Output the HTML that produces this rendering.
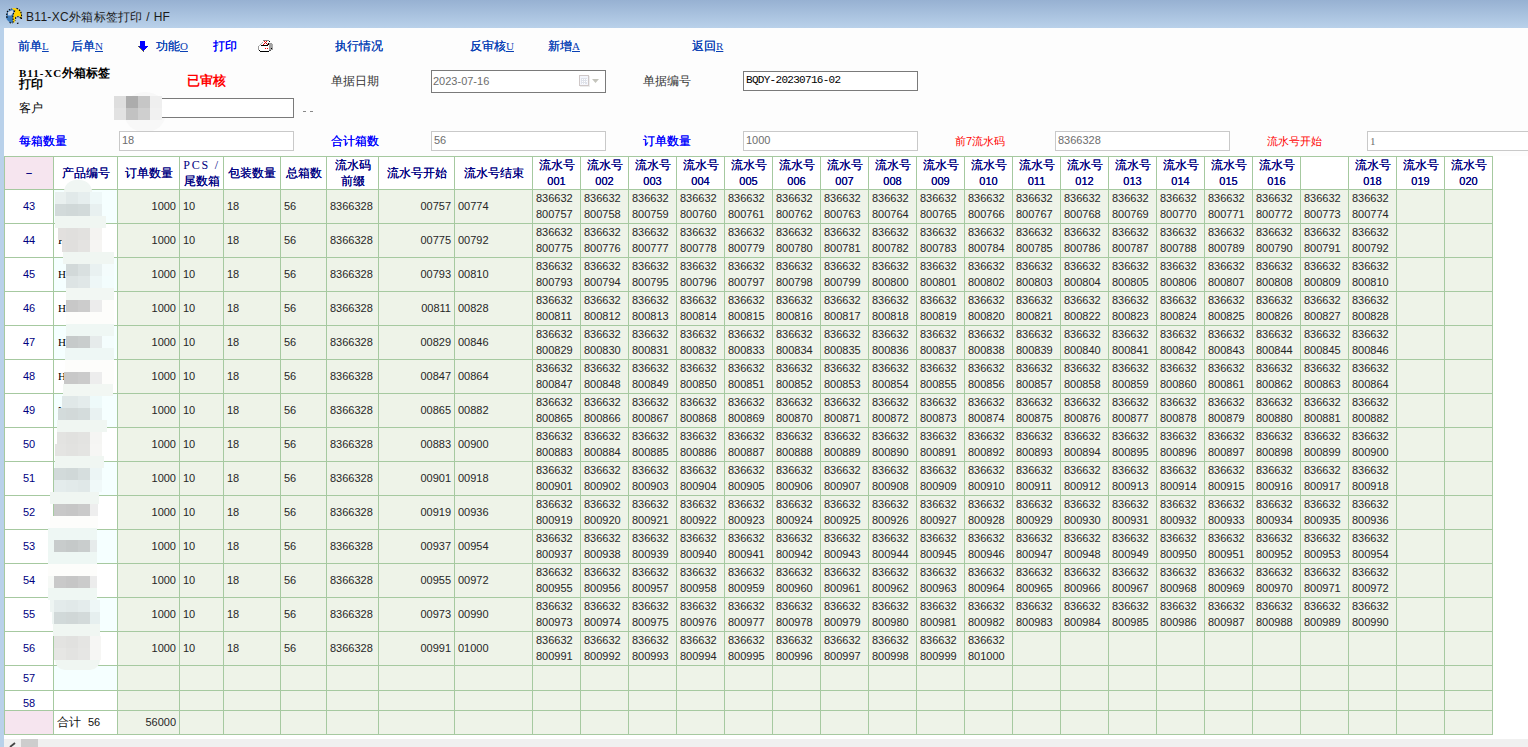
<!DOCTYPE html><html><head><meta charset="utf-8"><style>
html,body{margin:0;padding:0;}
body{width:1528px;height:747px;overflow:hidden;position:relative;background:#fff;font-family:"Liberation Sans", sans-serif;}
div{box-sizing:border-box;}
.u{text-decoration:underline;}
</style></head><body>
<div style="position:absolute;left:0px;top:0px;width:1528px;height:28px;background:linear-gradient(#97b1d2,#b9d1ea);"></div>
<div style="position:absolute;left:4px;top:28px;width:1524px;height:128px;background:#fdfdfd;"></div>
<div style="position:absolute;left:0px;top:28px;width:4px;height:719px;background:#b9d1ea;"></div>
<svg style="position:absolute;left:4px;top:6px" width="20" height="20" viewBox="0 0 20 20">
<path d="M2.5 9 Q3.5 4 8 3 L11 4 Q9 8 8.8 12 L9 17 Q5 17 2.5 13 Z" fill="#3b79b9"/>
<path d="M4 6 L8.5 4 L9.5 6.5 L7 9.5 L4 9.5 Z" fill="#cbd7e6"/>
<path d="M8 2 Q14 1.5 17 6 L17.8 13 L16 10.5 Q13.5 9 11.5 11.5 L10.5 16.5 L9 16.5 Q8.5 10 11 5.5 Z" fill="#ffd200"/>
<g fill="none" stroke="#000" stroke-width="1.1" stroke-dasharray="1.6 1.2">
<path d="M3 12 Q2 6 4.5 4.5 Q6 3 8 3"/>
<path d="M12.5 2.3 Q16.5 4 17.5 8 L17.5 13.5"/>
<path d="M11 4.5 Q8.5 8 9 12 L9.2 16.5"/>
<path d="M17 12.5 Q14.5 9.5 11.8 11.5 L11.2 14.5"/>
<path d="M5.5 16.5 L8.5 17.3 M13 17.5 L15.5 16.5"/>
</g>
</svg>
<div style="position:absolute;left:26px;top:9px;line-height:16px;text-align:left;white-space:nowrap;font-size:12px;color:#1b1b1b;letter-spacing:0.3px;">B11-XC外箱标签打印 / HF</div>
<div style="position:absolute;left:18px;top:38px;line-height:16px;text-align:left;white-space:nowrap;font-size:12px;color:#0a40b4;text-shadow:0 0 0.3px #0a40b4;">前单<span style="font-family:'Liberation Serif',serif;text-decoration:underline;font-size:11px;text-shadow:none;">L</span></div>
<div style="position:absolute;left:71px;top:38px;line-height:16px;text-align:left;white-space:nowrap;font-size:12px;color:#0a40b4;text-shadow:0 0 0.3px #0a40b4;">后单<span style="font-family:'Liberation Serif',serif;text-decoration:underline;font-size:11px;text-shadow:none;">N</span></div>
<svg style="position:absolute;left:130px;top:34px" width="30" height="24" viewBox="0 0 30 24" shape-rendering="crispEdges">
<rect x="10" y="7" width="5" height="5" fill="#0000ff"/>
<rect x="9" y="12" width="9" height="1" fill="#0000ff"/>
<rect x="10" y="13" width="7" height="1" fill="#0000ff"/>
<rect x="11" y="14" width="5" height="1" fill="#0000ff"/>
<rect x="12" y="15" width="3" height="1" fill="#0000ff"/>
<rect x="13" y="16" width="1" height="1" fill="#0000ff"/>
<rect x="8" y="12" width="1" height="1" fill="#6b6b30"/>
<rect x="9" y="13" width="1" height="1" fill="#6b6b40"/>
<rect x="10" y="14" width="1" height="1" fill="#6b6b40"/>
<rect x="11" y="15" width="1" height="1" fill="#6b6b40"/>
<rect x="12" y="16" width="1" height="1" fill="#6b6b50"/>
<rect x="13" y="17" width="1" height="1" fill="#6b6b50"/>
</svg>
<div style="position:absolute;left:156px;top:38px;line-height:16px;text-align:left;white-space:nowrap;font-size:12px;color:#0a40b4;text-shadow:0 0 0.3px #0a40b4;">功能<span style="font-family:'Liberation Serif',serif;text-decoration:underline;font-size:11px;text-shadow:none;">O</span></div>
<div style="position:absolute;left:213px;top:38px;line-height:16px;text-align:left;white-space:nowrap;font-size:12px;color:#0000ff;text-shadow:0 0 0.3px #0000ff;">打印</div>
<svg style="position:absolute;left:252px;top:34px" width="30" height="24" viewBox="0 0 30 24" shape-rendering="crispEdges">
<rect x="11" y="6" width="6" height="1" fill="#8a8a8a"/>
<rect x="17" y="7" width="1" height="1" fill="#000"/>
<rect x="12" y="7" width="1" height="1" fill="#e00"/><rect x="14" y="7" width="1" height="1" fill="#e00"/>
<rect x="13" y="8" width="1" height="1" fill="#e00"/>
<rect x="12" y="9" width="1" height="1" fill="#e00"/><rect x="14" y="9" width="1" height="1" fill="#900"/>
<rect x="11" y="10" width="1" height="1" fill="#e00"/><rect x="15" y="10" width="1" height="1" fill="#900"/>
<rect x="10" y="8" width="1" height="1" fill="#aaa"/><rect x="9" y="9" width="1" height="1" fill="#bbb"/><rect x="8" y="10" width="1" height="1" fill="#aaa"/><rect x="7" y="11" width="1" height="1" fill="#bbb"/>
<rect x="9" y="11" width="7" height="1" fill="#000"/><rect x="16" y="9" width="1" height="2" fill="#000"/>
<rect x="17" y="9" width="3" height="1" fill="#9a9a9a"/>
<rect x="6" y="12" width="1" height="4" fill="#9a9a9a"/>
<rect x="7" y="12" width="10" height="4" fill="#fff"/>
<rect x="17" y="10" width="4" height="6" fill="#a3a3a3"/><rect x="20" y="10" width="1" height="3" fill="#aaa"/>
<rect x="19" y="14" width="1" height="1" fill="#000"/>
<rect x="13" y="14" width="1" height="1" fill="#f00"/><rect x="15" y="14" width="1" height="1" fill="#f00"/>
<rect x="7" y="16" width="1" height="1" fill="#000"/>
<rect x="8" y="17" width="9" height="1" fill="#000"/><rect x="17" y="16" width="2" height="1" fill="#555"/>
</svg>
<div style="position:absolute;left:335px;top:38px;line-height:16px;text-align:left;white-space:nowrap;font-size:12px;color:#0a40b4;text-shadow:0 0 0.3px #0a40b4;">执行情况</div>
<div style="position:absolute;left:470px;top:38px;line-height:16px;text-align:left;white-space:nowrap;font-size:12px;color:#0a40b4;text-shadow:0 0 0.3px #0a40b4;">反审核<span style="font-family:'Liberation Serif',serif;text-decoration:underline;font-size:11px;text-shadow:none;">U</span></div>
<div style="position:absolute;left:548px;top:38px;line-height:16px;text-align:left;white-space:nowrap;font-size:12px;color:#0a40b4;text-shadow:0 0 0.3px #0a40b4;">新增<span style="font-family:'Liberation Serif',serif;text-decoration:underline;font-size:11px;text-shadow:none;">A</span></div>
<div style="position:absolute;left:692px;top:38px;line-height:16px;text-align:left;white-space:nowrap;font-size:12px;color:#0a40b4;text-shadow:0 0 0.3px #0a40b4;">返回<span style="font-family:'Liberation Serif',serif;text-decoration:underline;font-size:11px;text-shadow:none;">R</span></div>
<div style="position:absolute;left:19px;top:68px;line-height:11px;text-align:left;white-space:nowrap;font-size:12px;font-weight:bold;color:#000;font-family:'Liberation Serif',serif;"><span style="letter-spacing:1px;font-size:11px">B11-XC</span>外箱标签<br>打印</div>
<div style="position:absolute;left:187px;top:73px;line-height:16px;text-align:left;white-space:nowrap;font-size:12.5px;font-weight:bold;color:#f00;">已审核</div>
<div style="position:absolute;left:331px;top:73px;line-height:16px;text-align:left;white-space:nowrap;font-size:12px;color:#333;">单据日期</div>
<div style="position:absolute;left:431px;top:70px;width:175px;height:23px;border:1px solid #7a7a7a;background:#fff;"></div>
<div style="position:absolute;left:433px;top:74px;line-height:14px;text-align:left;white-space:nowrap;font-size:11px;color:#6d6d6d;">2023-07-16</div>
<svg style="position:absolute;left:578px;top:74px" width="24" height="14" viewBox="0 0 24 14" shape-rendering="crispEdges">
<rect x="2" y="2" width="10" height="11" fill="#ededed"/>
<rect x="1" y="1" width="10" height="11" fill="#cfc8c8"/>
<rect x="2" y="2" width="8" height="9" fill="#f4f6fc"/>
<rect x="3" y="4" width="6" height="6" fill="#dfe2ea"/>
<rect x="4" y="5" width="1" height="1" fill="#fff"/><rect x="6" y="5" width="1" height="1" fill="#fff"/><rect x="8" y="5" width="1" height="1" fill="#fff"/>
<rect x="4" y="7" width="1" height="1" fill="#fff"/><rect x="6" y="7" width="1" height="1" fill="#fff"/><rect x="8" y="7" width="1" height="1" fill="#fff"/>
<rect x="4" y="9" width="1" height="1" fill="#fff"/><rect x="6" y="9" width="1" height="1" fill="#fff"/>
<path d="M14 5 H21 L17.5 9Z" fill="#c4c4bc" shape-rendering="auto"/>
</svg>
<div style="position:absolute;left:643px;top:73px;line-height:16px;text-align:left;white-space:nowrap;font-size:12px;color:#333;">单据编号</div>
<div style="position:absolute;left:743px;top:71px;width:175px;height:20px;border:1px solid #7a7a7a;background:#fff;"></div>
<div style="position:absolute;left:746px;top:73px;line-height:14px;text-align:left;white-space:nowrap;font-size:11px;color:#000;font-family:'Liberation Mono',monospace;letter-spacing:-0.7px;">BQDY-20230716-02</div>
<div style="position:absolute;left:19px;top:101px;line-height:14px;text-align:left;white-space:nowrap;font-size:12px;color:#000;">客户</div>
<div style="position:absolute;left:162px;top:98px;width:132px;height:20px;border:1px solid #7a7a7a;border-left:none;background:#fff;"></div>
<div style="position:absolute;left:124px;top:92px;width:42px;height:40px;background:#f8f8f8;border-radius:20px;"></div>
<div style="position:absolute;left:162px;top:98px;width:132px;height:20px;border:1px solid #7a7a7a;border-left:none;background:#fff;"></div>
<div style="position:absolute;left:114px;top:96px;width:12px;height:12px;background:#dedede;"></div>
<div style="position:absolute;left:126px;top:96px;width:12px;height:12px;background:#acacac;"></div>
<div style="position:absolute;left:138px;top:96px;width:12px;height:12px;background:#c6c6c6;"></div>
<div style="position:absolute;left:114px;top:108px;width:12px;height:12px;background:#e2e2e2;"></div>
<div style="position:absolute;left:126px;top:108px;width:12px;height:12px;background:#c2c2c2;"></div>
<div style="position:absolute;left:138px;top:108px;width:12px;height:12px;background:#cfcfcf;"></div>
<div style="position:absolute;left:150px;top:96px;width:12px;height:12px;background:#efefef;"></div>
<div style="position:absolute;left:150px;top:108px;width:12px;height:12px;background:#f1f1f1;"></div>
<div style="position:absolute;left:303px;top:111px;width:3px;height:1px;background:#888;"></div>
<div style="position:absolute;left:310px;top:111px;width:3px;height:1px;background:#888;"></div>
<div style="position:absolute;left:19px;top:133px;line-height:16px;text-align:left;white-space:nowrap;font-size:12px;color:#0000ff;text-shadow:0 0 0.2px #0000ff;">每箱数量</div>
<div style="position:absolute;left:119px;top:131px;width:175px;height:20px;border:1px solid #c9c9c9;background:#fff;"></div>
<div style="position:absolute;left:122px;top:133px;line-height:14px;text-align:left;white-space:nowrap;font-size:11px;color:#6d6d6d;">18</div>
<div style="position:absolute;left:331px;top:133px;line-height:16px;text-align:left;white-space:nowrap;font-size:12px;color:#0000ff;text-shadow:0 0 0.2px #0000ff;">合计箱数</div>
<div style="position:absolute;left:431px;top:131px;width:175px;height:20px;border:1px solid #c9c9c9;background:#fff;"></div>
<div style="position:absolute;left:434px;top:133px;line-height:14px;text-align:left;white-space:nowrap;font-size:11px;color:#6d6d6d;">56</div>
<div style="position:absolute;left:643px;top:133px;line-height:16px;text-align:left;white-space:nowrap;font-size:12px;color:#0000ff;text-shadow:0 0 0.2px #0000ff;">订单数量</div>
<div style="position:absolute;left:743px;top:131px;width:175px;height:20px;border:1px solid #c9c9c9;background:#fff;"></div>
<div style="position:absolute;left:746px;top:133px;line-height:14px;text-align:left;white-space:nowrap;font-size:11px;color:#6d6d6d;">1000</div>
<div style="position:absolute;left:955px;top:134px;line-height:14px;text-align:left;white-space:nowrap;font-size:11px;color:#f00;">前7流水码</div>
<div style="position:absolute;left:1055px;top:131px;width:175px;height:20px;border:1px solid #c9c9c9;background:#fff;"></div>
<div style="position:absolute;left:1058px;top:133px;line-height:14px;text-align:left;white-space:nowrap;font-size:11px;color:#6d6d6d;">8366328</div>
<div style="position:absolute;left:1267px;top:134px;line-height:14px;text-align:left;white-space:nowrap;font-size:11px;color:#f00;">流水号开始</div>
<div style="position:absolute;left:1367px;top:131px;width:175px;height:20px;border:1px solid #c9c9c9;background:#fff;"></div>
<div style="position:absolute;left:1370px;top:134px;line-height:14px;text-align:left;white-space:nowrap;font-size:11px;color:#6d6d6d;font-family:'Liberation Serif',serif;">1</div>
<div style="position:absolute;left:4px;top:156px;width:49px;height:33px;background:#f6e5ef;"></div>
<div style="position:absolute;left:53px;top:189px;width:64px;height:34px;background:#f5ffff;"></div>
<div style="position:absolute;left:117px;top:189px;width:62px;height:34px;background:#eef3e8;"></div>
<div style="position:absolute;left:179px;top:189px;width:44px;height:34px;background:#eef3e8;"></div>
<div style="position:absolute;left:223px;top:189px;width:57px;height:34px;background:#eef3e8;"></div>
<div style="position:absolute;left:280px;top:189px;width:46px;height:34px;background:#eef3e8;"></div>
<div style="position:absolute;left:326px;top:189px;width:52px;height:34px;background:#eef3e8;"></div>
<div style="position:absolute;left:378px;top:189px;width:76px;height:34px;background:#eef3e8;"></div>
<div style="position:absolute;left:454px;top:189px;width:78px;height:34px;background:#eef3e8;"></div>
<div style="position:absolute;left:532px;top:189px;width:48px;height:34px;background:#eef3e8;"></div>
<div style="position:absolute;left:580px;top:189px;width:48px;height:34px;background:#eef3e8;"></div>
<div style="position:absolute;left:628px;top:189px;width:48px;height:34px;background:#eef3e8;"></div>
<div style="position:absolute;left:676px;top:189px;width:48px;height:34px;background:#eef3e8;"></div>
<div style="position:absolute;left:724px;top:189px;width:48px;height:34px;background:#eef3e8;"></div>
<div style="position:absolute;left:772px;top:189px;width:48px;height:34px;background:#eef3e8;"></div>
<div style="position:absolute;left:820px;top:189px;width:48px;height:34px;background:#eef3e8;"></div>
<div style="position:absolute;left:868px;top:189px;width:48px;height:34px;background:#eef3e8;"></div>
<div style="position:absolute;left:916px;top:189px;width:48px;height:34px;background:#eef3e8;"></div>
<div style="position:absolute;left:964px;top:189px;width:48px;height:34px;background:#eef3e8;"></div>
<div style="position:absolute;left:1012px;top:189px;width:48px;height:34px;background:#eef3e8;"></div>
<div style="position:absolute;left:1060px;top:189px;width:48px;height:34px;background:#eef3e8;"></div>
<div style="position:absolute;left:1108px;top:189px;width:48px;height:34px;background:#eef3e8;"></div>
<div style="position:absolute;left:1156px;top:189px;width:48px;height:34px;background:#eef3e8;"></div>
<div style="position:absolute;left:1204px;top:189px;width:48px;height:34px;background:#eef3e8;"></div>
<div style="position:absolute;left:1252px;top:189px;width:48px;height:34px;background:#eef3e8;"></div>
<div style="position:absolute;left:1300px;top:189px;width:48px;height:34px;background:#eef3e8;"></div>
<div style="position:absolute;left:1348px;top:189px;width:48px;height:34px;background:#eef3e8;"></div>
<div style="position:absolute;left:1396px;top:189px;width:48px;height:34px;background:#eef3e8;"></div>
<div style="position:absolute;left:1444px;top:189px;width:48px;height:34px;background:#eef3e8;"></div>
<div style="position:absolute;left:117px;top:223px;width:62px;height:34px;background:#eef3e8;"></div>
<div style="position:absolute;left:179px;top:223px;width:44px;height:34px;background:#eef3e8;"></div>
<div style="position:absolute;left:223px;top:223px;width:57px;height:34px;background:#eef3e8;"></div>
<div style="position:absolute;left:280px;top:223px;width:46px;height:34px;background:#eef3e8;"></div>
<div style="position:absolute;left:326px;top:223px;width:52px;height:34px;background:#eef3e8;"></div>
<div style="position:absolute;left:378px;top:223px;width:76px;height:34px;background:#eef3e8;"></div>
<div style="position:absolute;left:454px;top:223px;width:78px;height:34px;background:#eef3e8;"></div>
<div style="position:absolute;left:532px;top:223px;width:48px;height:34px;background:#eef3e8;"></div>
<div style="position:absolute;left:580px;top:223px;width:48px;height:34px;background:#eef3e8;"></div>
<div style="position:absolute;left:628px;top:223px;width:48px;height:34px;background:#eef3e8;"></div>
<div style="position:absolute;left:676px;top:223px;width:48px;height:34px;background:#eef3e8;"></div>
<div style="position:absolute;left:724px;top:223px;width:48px;height:34px;background:#eef3e8;"></div>
<div style="position:absolute;left:772px;top:223px;width:48px;height:34px;background:#eef3e8;"></div>
<div style="position:absolute;left:820px;top:223px;width:48px;height:34px;background:#eef3e8;"></div>
<div style="position:absolute;left:868px;top:223px;width:48px;height:34px;background:#eef3e8;"></div>
<div style="position:absolute;left:916px;top:223px;width:48px;height:34px;background:#eef3e8;"></div>
<div style="position:absolute;left:964px;top:223px;width:48px;height:34px;background:#eef3e8;"></div>
<div style="position:absolute;left:1012px;top:223px;width:48px;height:34px;background:#eef3e8;"></div>
<div style="position:absolute;left:1060px;top:223px;width:48px;height:34px;background:#eef3e8;"></div>
<div style="position:absolute;left:1108px;top:223px;width:48px;height:34px;background:#eef3e8;"></div>
<div style="position:absolute;left:1156px;top:223px;width:48px;height:34px;background:#eef3e8;"></div>
<div style="position:absolute;left:1204px;top:223px;width:48px;height:34px;background:#eef3e8;"></div>
<div style="position:absolute;left:1252px;top:223px;width:48px;height:34px;background:#eef3e8;"></div>
<div style="position:absolute;left:1300px;top:223px;width:48px;height:34px;background:#eef3e8;"></div>
<div style="position:absolute;left:1348px;top:223px;width:48px;height:34px;background:#eef3e8;"></div>
<div style="position:absolute;left:1396px;top:223px;width:48px;height:34px;background:#eef3e8;"></div>
<div style="position:absolute;left:1444px;top:223px;width:48px;height:34px;background:#eef3e8;"></div>
<div style="position:absolute;left:53px;top:257px;width:64px;height:34px;background:#f5ffff;"></div>
<div style="position:absolute;left:117px;top:257px;width:62px;height:34px;background:#eef3e8;"></div>
<div style="position:absolute;left:179px;top:257px;width:44px;height:34px;background:#eef3e8;"></div>
<div style="position:absolute;left:223px;top:257px;width:57px;height:34px;background:#eef3e8;"></div>
<div style="position:absolute;left:280px;top:257px;width:46px;height:34px;background:#eef3e8;"></div>
<div style="position:absolute;left:326px;top:257px;width:52px;height:34px;background:#eef3e8;"></div>
<div style="position:absolute;left:378px;top:257px;width:76px;height:34px;background:#eef3e8;"></div>
<div style="position:absolute;left:454px;top:257px;width:78px;height:34px;background:#eef3e8;"></div>
<div style="position:absolute;left:532px;top:257px;width:48px;height:34px;background:#eef3e8;"></div>
<div style="position:absolute;left:580px;top:257px;width:48px;height:34px;background:#eef3e8;"></div>
<div style="position:absolute;left:628px;top:257px;width:48px;height:34px;background:#eef3e8;"></div>
<div style="position:absolute;left:676px;top:257px;width:48px;height:34px;background:#eef3e8;"></div>
<div style="position:absolute;left:724px;top:257px;width:48px;height:34px;background:#eef3e8;"></div>
<div style="position:absolute;left:772px;top:257px;width:48px;height:34px;background:#eef3e8;"></div>
<div style="position:absolute;left:820px;top:257px;width:48px;height:34px;background:#eef3e8;"></div>
<div style="position:absolute;left:868px;top:257px;width:48px;height:34px;background:#eef3e8;"></div>
<div style="position:absolute;left:916px;top:257px;width:48px;height:34px;background:#eef3e8;"></div>
<div style="position:absolute;left:964px;top:257px;width:48px;height:34px;background:#eef3e8;"></div>
<div style="position:absolute;left:1012px;top:257px;width:48px;height:34px;background:#eef3e8;"></div>
<div style="position:absolute;left:1060px;top:257px;width:48px;height:34px;background:#eef3e8;"></div>
<div style="position:absolute;left:1108px;top:257px;width:48px;height:34px;background:#eef3e8;"></div>
<div style="position:absolute;left:1156px;top:257px;width:48px;height:34px;background:#eef3e8;"></div>
<div style="position:absolute;left:1204px;top:257px;width:48px;height:34px;background:#eef3e8;"></div>
<div style="position:absolute;left:1252px;top:257px;width:48px;height:34px;background:#eef3e8;"></div>
<div style="position:absolute;left:1300px;top:257px;width:48px;height:34px;background:#eef3e8;"></div>
<div style="position:absolute;left:1348px;top:257px;width:48px;height:34px;background:#eef3e8;"></div>
<div style="position:absolute;left:1396px;top:257px;width:48px;height:34px;background:#eef3e8;"></div>
<div style="position:absolute;left:1444px;top:257px;width:48px;height:34px;background:#eef3e8;"></div>
<div style="position:absolute;left:117px;top:291px;width:62px;height:34px;background:#eef3e8;"></div>
<div style="position:absolute;left:179px;top:291px;width:44px;height:34px;background:#eef3e8;"></div>
<div style="position:absolute;left:223px;top:291px;width:57px;height:34px;background:#eef3e8;"></div>
<div style="position:absolute;left:280px;top:291px;width:46px;height:34px;background:#eef3e8;"></div>
<div style="position:absolute;left:326px;top:291px;width:52px;height:34px;background:#eef3e8;"></div>
<div style="position:absolute;left:378px;top:291px;width:76px;height:34px;background:#eef3e8;"></div>
<div style="position:absolute;left:454px;top:291px;width:78px;height:34px;background:#eef3e8;"></div>
<div style="position:absolute;left:532px;top:291px;width:48px;height:34px;background:#eef3e8;"></div>
<div style="position:absolute;left:580px;top:291px;width:48px;height:34px;background:#eef3e8;"></div>
<div style="position:absolute;left:628px;top:291px;width:48px;height:34px;background:#eef3e8;"></div>
<div style="position:absolute;left:676px;top:291px;width:48px;height:34px;background:#eef3e8;"></div>
<div style="position:absolute;left:724px;top:291px;width:48px;height:34px;background:#eef3e8;"></div>
<div style="position:absolute;left:772px;top:291px;width:48px;height:34px;background:#eef3e8;"></div>
<div style="position:absolute;left:820px;top:291px;width:48px;height:34px;background:#eef3e8;"></div>
<div style="position:absolute;left:868px;top:291px;width:48px;height:34px;background:#eef3e8;"></div>
<div style="position:absolute;left:916px;top:291px;width:48px;height:34px;background:#eef3e8;"></div>
<div style="position:absolute;left:964px;top:291px;width:48px;height:34px;background:#eef3e8;"></div>
<div style="position:absolute;left:1012px;top:291px;width:48px;height:34px;background:#eef3e8;"></div>
<div style="position:absolute;left:1060px;top:291px;width:48px;height:34px;background:#eef3e8;"></div>
<div style="position:absolute;left:1108px;top:291px;width:48px;height:34px;background:#eef3e8;"></div>
<div style="position:absolute;left:1156px;top:291px;width:48px;height:34px;background:#eef3e8;"></div>
<div style="position:absolute;left:1204px;top:291px;width:48px;height:34px;background:#eef3e8;"></div>
<div style="position:absolute;left:1252px;top:291px;width:48px;height:34px;background:#eef3e8;"></div>
<div style="position:absolute;left:1300px;top:291px;width:48px;height:34px;background:#eef3e8;"></div>
<div style="position:absolute;left:1348px;top:291px;width:48px;height:34px;background:#eef3e8;"></div>
<div style="position:absolute;left:1396px;top:291px;width:48px;height:34px;background:#eef3e8;"></div>
<div style="position:absolute;left:1444px;top:291px;width:48px;height:34px;background:#eef3e8;"></div>
<div style="position:absolute;left:53px;top:325px;width:64px;height:34px;background:#f5ffff;"></div>
<div style="position:absolute;left:117px;top:325px;width:62px;height:34px;background:#eef3e8;"></div>
<div style="position:absolute;left:179px;top:325px;width:44px;height:34px;background:#eef3e8;"></div>
<div style="position:absolute;left:223px;top:325px;width:57px;height:34px;background:#eef3e8;"></div>
<div style="position:absolute;left:280px;top:325px;width:46px;height:34px;background:#eef3e8;"></div>
<div style="position:absolute;left:326px;top:325px;width:52px;height:34px;background:#eef3e8;"></div>
<div style="position:absolute;left:378px;top:325px;width:76px;height:34px;background:#eef3e8;"></div>
<div style="position:absolute;left:454px;top:325px;width:78px;height:34px;background:#eef3e8;"></div>
<div style="position:absolute;left:532px;top:325px;width:48px;height:34px;background:#eef3e8;"></div>
<div style="position:absolute;left:580px;top:325px;width:48px;height:34px;background:#eef3e8;"></div>
<div style="position:absolute;left:628px;top:325px;width:48px;height:34px;background:#eef3e8;"></div>
<div style="position:absolute;left:676px;top:325px;width:48px;height:34px;background:#eef3e8;"></div>
<div style="position:absolute;left:724px;top:325px;width:48px;height:34px;background:#eef3e8;"></div>
<div style="position:absolute;left:772px;top:325px;width:48px;height:34px;background:#eef3e8;"></div>
<div style="position:absolute;left:820px;top:325px;width:48px;height:34px;background:#eef3e8;"></div>
<div style="position:absolute;left:868px;top:325px;width:48px;height:34px;background:#eef3e8;"></div>
<div style="position:absolute;left:916px;top:325px;width:48px;height:34px;background:#eef3e8;"></div>
<div style="position:absolute;left:964px;top:325px;width:48px;height:34px;background:#eef3e8;"></div>
<div style="position:absolute;left:1012px;top:325px;width:48px;height:34px;background:#eef3e8;"></div>
<div style="position:absolute;left:1060px;top:325px;width:48px;height:34px;background:#eef3e8;"></div>
<div style="position:absolute;left:1108px;top:325px;width:48px;height:34px;background:#eef3e8;"></div>
<div style="position:absolute;left:1156px;top:325px;width:48px;height:34px;background:#eef3e8;"></div>
<div style="position:absolute;left:1204px;top:325px;width:48px;height:34px;background:#eef3e8;"></div>
<div style="position:absolute;left:1252px;top:325px;width:48px;height:34px;background:#eef3e8;"></div>
<div style="position:absolute;left:1300px;top:325px;width:48px;height:34px;background:#eef3e8;"></div>
<div style="position:absolute;left:1348px;top:325px;width:48px;height:34px;background:#eef3e8;"></div>
<div style="position:absolute;left:1396px;top:325px;width:48px;height:34px;background:#eef3e8;"></div>
<div style="position:absolute;left:1444px;top:325px;width:48px;height:34px;background:#eef3e8;"></div>
<div style="position:absolute;left:117px;top:359px;width:62px;height:34px;background:#eef3e8;"></div>
<div style="position:absolute;left:179px;top:359px;width:44px;height:34px;background:#eef3e8;"></div>
<div style="position:absolute;left:223px;top:359px;width:57px;height:34px;background:#eef3e8;"></div>
<div style="position:absolute;left:280px;top:359px;width:46px;height:34px;background:#eef3e8;"></div>
<div style="position:absolute;left:326px;top:359px;width:52px;height:34px;background:#eef3e8;"></div>
<div style="position:absolute;left:378px;top:359px;width:76px;height:34px;background:#eef3e8;"></div>
<div style="position:absolute;left:454px;top:359px;width:78px;height:34px;background:#eef3e8;"></div>
<div style="position:absolute;left:532px;top:359px;width:48px;height:34px;background:#eef3e8;"></div>
<div style="position:absolute;left:580px;top:359px;width:48px;height:34px;background:#eef3e8;"></div>
<div style="position:absolute;left:628px;top:359px;width:48px;height:34px;background:#eef3e8;"></div>
<div style="position:absolute;left:676px;top:359px;width:48px;height:34px;background:#eef3e8;"></div>
<div style="position:absolute;left:724px;top:359px;width:48px;height:34px;background:#eef3e8;"></div>
<div style="position:absolute;left:772px;top:359px;width:48px;height:34px;background:#eef3e8;"></div>
<div style="position:absolute;left:820px;top:359px;width:48px;height:34px;background:#eef3e8;"></div>
<div style="position:absolute;left:868px;top:359px;width:48px;height:34px;background:#eef3e8;"></div>
<div style="position:absolute;left:916px;top:359px;width:48px;height:34px;background:#eef3e8;"></div>
<div style="position:absolute;left:964px;top:359px;width:48px;height:34px;background:#eef3e8;"></div>
<div style="position:absolute;left:1012px;top:359px;width:48px;height:34px;background:#eef3e8;"></div>
<div style="position:absolute;left:1060px;top:359px;width:48px;height:34px;background:#eef3e8;"></div>
<div style="position:absolute;left:1108px;top:359px;width:48px;height:34px;background:#eef3e8;"></div>
<div style="position:absolute;left:1156px;top:359px;width:48px;height:34px;background:#eef3e8;"></div>
<div style="position:absolute;left:1204px;top:359px;width:48px;height:34px;background:#eef3e8;"></div>
<div style="position:absolute;left:1252px;top:359px;width:48px;height:34px;background:#eef3e8;"></div>
<div style="position:absolute;left:1300px;top:359px;width:48px;height:34px;background:#eef3e8;"></div>
<div style="position:absolute;left:1348px;top:359px;width:48px;height:34px;background:#eef3e8;"></div>
<div style="position:absolute;left:1396px;top:359px;width:48px;height:34px;background:#eef3e8;"></div>
<div style="position:absolute;left:1444px;top:359px;width:48px;height:34px;background:#eef3e8;"></div>
<div style="position:absolute;left:53px;top:393px;width:64px;height:34px;background:#f5ffff;"></div>
<div style="position:absolute;left:117px;top:393px;width:62px;height:34px;background:#eef3e8;"></div>
<div style="position:absolute;left:179px;top:393px;width:44px;height:34px;background:#eef3e8;"></div>
<div style="position:absolute;left:223px;top:393px;width:57px;height:34px;background:#eef3e8;"></div>
<div style="position:absolute;left:280px;top:393px;width:46px;height:34px;background:#eef3e8;"></div>
<div style="position:absolute;left:326px;top:393px;width:52px;height:34px;background:#eef3e8;"></div>
<div style="position:absolute;left:378px;top:393px;width:76px;height:34px;background:#eef3e8;"></div>
<div style="position:absolute;left:454px;top:393px;width:78px;height:34px;background:#eef3e8;"></div>
<div style="position:absolute;left:532px;top:393px;width:48px;height:34px;background:#eef3e8;"></div>
<div style="position:absolute;left:580px;top:393px;width:48px;height:34px;background:#eef3e8;"></div>
<div style="position:absolute;left:628px;top:393px;width:48px;height:34px;background:#eef3e8;"></div>
<div style="position:absolute;left:676px;top:393px;width:48px;height:34px;background:#eef3e8;"></div>
<div style="position:absolute;left:724px;top:393px;width:48px;height:34px;background:#eef3e8;"></div>
<div style="position:absolute;left:772px;top:393px;width:48px;height:34px;background:#eef3e8;"></div>
<div style="position:absolute;left:820px;top:393px;width:48px;height:34px;background:#eef3e8;"></div>
<div style="position:absolute;left:868px;top:393px;width:48px;height:34px;background:#eef3e8;"></div>
<div style="position:absolute;left:916px;top:393px;width:48px;height:34px;background:#eef3e8;"></div>
<div style="position:absolute;left:964px;top:393px;width:48px;height:34px;background:#eef3e8;"></div>
<div style="position:absolute;left:1012px;top:393px;width:48px;height:34px;background:#eef3e8;"></div>
<div style="position:absolute;left:1060px;top:393px;width:48px;height:34px;background:#eef3e8;"></div>
<div style="position:absolute;left:1108px;top:393px;width:48px;height:34px;background:#eef3e8;"></div>
<div style="position:absolute;left:1156px;top:393px;width:48px;height:34px;background:#eef3e8;"></div>
<div style="position:absolute;left:1204px;top:393px;width:48px;height:34px;background:#eef3e8;"></div>
<div style="position:absolute;left:1252px;top:393px;width:48px;height:34px;background:#eef3e8;"></div>
<div style="position:absolute;left:1300px;top:393px;width:48px;height:34px;background:#eef3e8;"></div>
<div style="position:absolute;left:1348px;top:393px;width:48px;height:34px;background:#eef3e8;"></div>
<div style="position:absolute;left:1396px;top:393px;width:48px;height:34px;background:#eef3e8;"></div>
<div style="position:absolute;left:1444px;top:393px;width:48px;height:34px;background:#eef3e8;"></div>
<div style="position:absolute;left:117px;top:427px;width:62px;height:34px;background:#eef3e8;"></div>
<div style="position:absolute;left:179px;top:427px;width:44px;height:34px;background:#eef3e8;"></div>
<div style="position:absolute;left:223px;top:427px;width:57px;height:34px;background:#eef3e8;"></div>
<div style="position:absolute;left:280px;top:427px;width:46px;height:34px;background:#eef3e8;"></div>
<div style="position:absolute;left:326px;top:427px;width:52px;height:34px;background:#eef3e8;"></div>
<div style="position:absolute;left:378px;top:427px;width:76px;height:34px;background:#eef3e8;"></div>
<div style="position:absolute;left:454px;top:427px;width:78px;height:34px;background:#eef3e8;"></div>
<div style="position:absolute;left:532px;top:427px;width:48px;height:34px;background:#eef3e8;"></div>
<div style="position:absolute;left:580px;top:427px;width:48px;height:34px;background:#eef3e8;"></div>
<div style="position:absolute;left:628px;top:427px;width:48px;height:34px;background:#eef3e8;"></div>
<div style="position:absolute;left:676px;top:427px;width:48px;height:34px;background:#eef3e8;"></div>
<div style="position:absolute;left:724px;top:427px;width:48px;height:34px;background:#eef3e8;"></div>
<div style="position:absolute;left:772px;top:427px;width:48px;height:34px;background:#eef3e8;"></div>
<div style="position:absolute;left:820px;top:427px;width:48px;height:34px;background:#eef3e8;"></div>
<div style="position:absolute;left:868px;top:427px;width:48px;height:34px;background:#eef3e8;"></div>
<div style="position:absolute;left:916px;top:427px;width:48px;height:34px;background:#eef3e8;"></div>
<div style="position:absolute;left:964px;top:427px;width:48px;height:34px;background:#eef3e8;"></div>
<div style="position:absolute;left:1012px;top:427px;width:48px;height:34px;background:#eef3e8;"></div>
<div style="position:absolute;left:1060px;top:427px;width:48px;height:34px;background:#eef3e8;"></div>
<div style="position:absolute;left:1108px;top:427px;width:48px;height:34px;background:#eef3e8;"></div>
<div style="position:absolute;left:1156px;top:427px;width:48px;height:34px;background:#eef3e8;"></div>
<div style="position:absolute;left:1204px;top:427px;width:48px;height:34px;background:#eef3e8;"></div>
<div style="position:absolute;left:1252px;top:427px;width:48px;height:34px;background:#eef3e8;"></div>
<div style="position:absolute;left:1300px;top:427px;width:48px;height:34px;background:#eef3e8;"></div>
<div style="position:absolute;left:1348px;top:427px;width:48px;height:34px;background:#eef3e8;"></div>
<div style="position:absolute;left:1396px;top:427px;width:48px;height:34px;background:#eef3e8;"></div>
<div style="position:absolute;left:1444px;top:427px;width:48px;height:34px;background:#eef3e8;"></div>
<div style="position:absolute;left:53px;top:461px;width:64px;height:34px;background:#f5ffff;"></div>
<div style="position:absolute;left:117px;top:461px;width:62px;height:34px;background:#eef3e8;"></div>
<div style="position:absolute;left:179px;top:461px;width:44px;height:34px;background:#eef3e8;"></div>
<div style="position:absolute;left:223px;top:461px;width:57px;height:34px;background:#eef3e8;"></div>
<div style="position:absolute;left:280px;top:461px;width:46px;height:34px;background:#eef3e8;"></div>
<div style="position:absolute;left:326px;top:461px;width:52px;height:34px;background:#eef3e8;"></div>
<div style="position:absolute;left:378px;top:461px;width:76px;height:34px;background:#eef3e8;"></div>
<div style="position:absolute;left:454px;top:461px;width:78px;height:34px;background:#eef3e8;"></div>
<div style="position:absolute;left:532px;top:461px;width:48px;height:34px;background:#eef3e8;"></div>
<div style="position:absolute;left:580px;top:461px;width:48px;height:34px;background:#eef3e8;"></div>
<div style="position:absolute;left:628px;top:461px;width:48px;height:34px;background:#eef3e8;"></div>
<div style="position:absolute;left:676px;top:461px;width:48px;height:34px;background:#eef3e8;"></div>
<div style="position:absolute;left:724px;top:461px;width:48px;height:34px;background:#eef3e8;"></div>
<div style="position:absolute;left:772px;top:461px;width:48px;height:34px;background:#eef3e8;"></div>
<div style="position:absolute;left:820px;top:461px;width:48px;height:34px;background:#eef3e8;"></div>
<div style="position:absolute;left:868px;top:461px;width:48px;height:34px;background:#eef3e8;"></div>
<div style="position:absolute;left:916px;top:461px;width:48px;height:34px;background:#eef3e8;"></div>
<div style="position:absolute;left:964px;top:461px;width:48px;height:34px;background:#eef3e8;"></div>
<div style="position:absolute;left:1012px;top:461px;width:48px;height:34px;background:#eef3e8;"></div>
<div style="position:absolute;left:1060px;top:461px;width:48px;height:34px;background:#eef3e8;"></div>
<div style="position:absolute;left:1108px;top:461px;width:48px;height:34px;background:#eef3e8;"></div>
<div style="position:absolute;left:1156px;top:461px;width:48px;height:34px;background:#eef3e8;"></div>
<div style="position:absolute;left:1204px;top:461px;width:48px;height:34px;background:#eef3e8;"></div>
<div style="position:absolute;left:1252px;top:461px;width:48px;height:34px;background:#eef3e8;"></div>
<div style="position:absolute;left:1300px;top:461px;width:48px;height:34px;background:#eef3e8;"></div>
<div style="position:absolute;left:1348px;top:461px;width:48px;height:34px;background:#eef3e8;"></div>
<div style="position:absolute;left:1396px;top:461px;width:48px;height:34px;background:#eef3e8;"></div>
<div style="position:absolute;left:1444px;top:461px;width:48px;height:34px;background:#eef3e8;"></div>
<div style="position:absolute;left:117px;top:495px;width:62px;height:34px;background:#eef3e8;"></div>
<div style="position:absolute;left:179px;top:495px;width:44px;height:34px;background:#eef3e8;"></div>
<div style="position:absolute;left:223px;top:495px;width:57px;height:34px;background:#eef3e8;"></div>
<div style="position:absolute;left:280px;top:495px;width:46px;height:34px;background:#eef3e8;"></div>
<div style="position:absolute;left:326px;top:495px;width:52px;height:34px;background:#eef3e8;"></div>
<div style="position:absolute;left:378px;top:495px;width:76px;height:34px;background:#eef3e8;"></div>
<div style="position:absolute;left:454px;top:495px;width:78px;height:34px;background:#eef3e8;"></div>
<div style="position:absolute;left:532px;top:495px;width:48px;height:34px;background:#eef3e8;"></div>
<div style="position:absolute;left:580px;top:495px;width:48px;height:34px;background:#eef3e8;"></div>
<div style="position:absolute;left:628px;top:495px;width:48px;height:34px;background:#eef3e8;"></div>
<div style="position:absolute;left:676px;top:495px;width:48px;height:34px;background:#eef3e8;"></div>
<div style="position:absolute;left:724px;top:495px;width:48px;height:34px;background:#eef3e8;"></div>
<div style="position:absolute;left:772px;top:495px;width:48px;height:34px;background:#eef3e8;"></div>
<div style="position:absolute;left:820px;top:495px;width:48px;height:34px;background:#eef3e8;"></div>
<div style="position:absolute;left:868px;top:495px;width:48px;height:34px;background:#eef3e8;"></div>
<div style="position:absolute;left:916px;top:495px;width:48px;height:34px;background:#eef3e8;"></div>
<div style="position:absolute;left:964px;top:495px;width:48px;height:34px;background:#eef3e8;"></div>
<div style="position:absolute;left:1012px;top:495px;width:48px;height:34px;background:#eef3e8;"></div>
<div style="position:absolute;left:1060px;top:495px;width:48px;height:34px;background:#eef3e8;"></div>
<div style="position:absolute;left:1108px;top:495px;width:48px;height:34px;background:#eef3e8;"></div>
<div style="position:absolute;left:1156px;top:495px;width:48px;height:34px;background:#eef3e8;"></div>
<div style="position:absolute;left:1204px;top:495px;width:48px;height:34px;background:#eef3e8;"></div>
<div style="position:absolute;left:1252px;top:495px;width:48px;height:34px;background:#eef3e8;"></div>
<div style="position:absolute;left:1300px;top:495px;width:48px;height:34px;background:#eef3e8;"></div>
<div style="position:absolute;left:1348px;top:495px;width:48px;height:34px;background:#eef3e8;"></div>
<div style="position:absolute;left:1396px;top:495px;width:48px;height:34px;background:#eef3e8;"></div>
<div style="position:absolute;left:1444px;top:495px;width:48px;height:34px;background:#eef3e8;"></div>
<div style="position:absolute;left:53px;top:529px;width:64px;height:34px;background:#f5ffff;"></div>
<div style="position:absolute;left:117px;top:529px;width:62px;height:34px;background:#eef3e8;"></div>
<div style="position:absolute;left:179px;top:529px;width:44px;height:34px;background:#eef3e8;"></div>
<div style="position:absolute;left:223px;top:529px;width:57px;height:34px;background:#eef3e8;"></div>
<div style="position:absolute;left:280px;top:529px;width:46px;height:34px;background:#eef3e8;"></div>
<div style="position:absolute;left:326px;top:529px;width:52px;height:34px;background:#eef3e8;"></div>
<div style="position:absolute;left:378px;top:529px;width:76px;height:34px;background:#eef3e8;"></div>
<div style="position:absolute;left:454px;top:529px;width:78px;height:34px;background:#eef3e8;"></div>
<div style="position:absolute;left:532px;top:529px;width:48px;height:34px;background:#eef3e8;"></div>
<div style="position:absolute;left:580px;top:529px;width:48px;height:34px;background:#eef3e8;"></div>
<div style="position:absolute;left:628px;top:529px;width:48px;height:34px;background:#eef3e8;"></div>
<div style="position:absolute;left:676px;top:529px;width:48px;height:34px;background:#eef3e8;"></div>
<div style="position:absolute;left:724px;top:529px;width:48px;height:34px;background:#eef3e8;"></div>
<div style="position:absolute;left:772px;top:529px;width:48px;height:34px;background:#eef3e8;"></div>
<div style="position:absolute;left:820px;top:529px;width:48px;height:34px;background:#eef3e8;"></div>
<div style="position:absolute;left:868px;top:529px;width:48px;height:34px;background:#eef3e8;"></div>
<div style="position:absolute;left:916px;top:529px;width:48px;height:34px;background:#eef3e8;"></div>
<div style="position:absolute;left:964px;top:529px;width:48px;height:34px;background:#eef3e8;"></div>
<div style="position:absolute;left:1012px;top:529px;width:48px;height:34px;background:#eef3e8;"></div>
<div style="position:absolute;left:1060px;top:529px;width:48px;height:34px;background:#eef3e8;"></div>
<div style="position:absolute;left:1108px;top:529px;width:48px;height:34px;background:#eef3e8;"></div>
<div style="position:absolute;left:1156px;top:529px;width:48px;height:34px;background:#eef3e8;"></div>
<div style="position:absolute;left:1204px;top:529px;width:48px;height:34px;background:#eef3e8;"></div>
<div style="position:absolute;left:1252px;top:529px;width:48px;height:34px;background:#eef3e8;"></div>
<div style="position:absolute;left:1300px;top:529px;width:48px;height:34px;background:#eef3e8;"></div>
<div style="position:absolute;left:1348px;top:529px;width:48px;height:34px;background:#eef3e8;"></div>
<div style="position:absolute;left:1396px;top:529px;width:48px;height:34px;background:#eef3e8;"></div>
<div style="position:absolute;left:1444px;top:529px;width:48px;height:34px;background:#eef3e8;"></div>
<div style="position:absolute;left:117px;top:563px;width:62px;height:34px;background:#eef3e8;"></div>
<div style="position:absolute;left:179px;top:563px;width:44px;height:34px;background:#eef3e8;"></div>
<div style="position:absolute;left:223px;top:563px;width:57px;height:34px;background:#eef3e8;"></div>
<div style="position:absolute;left:280px;top:563px;width:46px;height:34px;background:#eef3e8;"></div>
<div style="position:absolute;left:326px;top:563px;width:52px;height:34px;background:#eef3e8;"></div>
<div style="position:absolute;left:378px;top:563px;width:76px;height:34px;background:#eef3e8;"></div>
<div style="position:absolute;left:454px;top:563px;width:78px;height:34px;background:#eef3e8;"></div>
<div style="position:absolute;left:532px;top:563px;width:48px;height:34px;background:#eef3e8;"></div>
<div style="position:absolute;left:580px;top:563px;width:48px;height:34px;background:#eef3e8;"></div>
<div style="position:absolute;left:628px;top:563px;width:48px;height:34px;background:#eef3e8;"></div>
<div style="position:absolute;left:676px;top:563px;width:48px;height:34px;background:#eef3e8;"></div>
<div style="position:absolute;left:724px;top:563px;width:48px;height:34px;background:#eef3e8;"></div>
<div style="position:absolute;left:772px;top:563px;width:48px;height:34px;background:#eef3e8;"></div>
<div style="position:absolute;left:820px;top:563px;width:48px;height:34px;background:#eef3e8;"></div>
<div style="position:absolute;left:868px;top:563px;width:48px;height:34px;background:#eef3e8;"></div>
<div style="position:absolute;left:916px;top:563px;width:48px;height:34px;background:#eef3e8;"></div>
<div style="position:absolute;left:964px;top:563px;width:48px;height:34px;background:#eef3e8;"></div>
<div style="position:absolute;left:1012px;top:563px;width:48px;height:34px;background:#eef3e8;"></div>
<div style="position:absolute;left:1060px;top:563px;width:48px;height:34px;background:#eef3e8;"></div>
<div style="position:absolute;left:1108px;top:563px;width:48px;height:34px;background:#eef3e8;"></div>
<div style="position:absolute;left:1156px;top:563px;width:48px;height:34px;background:#eef3e8;"></div>
<div style="position:absolute;left:1204px;top:563px;width:48px;height:34px;background:#eef3e8;"></div>
<div style="position:absolute;left:1252px;top:563px;width:48px;height:34px;background:#eef3e8;"></div>
<div style="position:absolute;left:1300px;top:563px;width:48px;height:34px;background:#eef3e8;"></div>
<div style="position:absolute;left:1348px;top:563px;width:48px;height:34px;background:#eef3e8;"></div>
<div style="position:absolute;left:1396px;top:563px;width:48px;height:34px;background:#eef3e8;"></div>
<div style="position:absolute;left:1444px;top:563px;width:48px;height:34px;background:#eef3e8;"></div>
<div style="position:absolute;left:53px;top:597px;width:64px;height:34px;background:#f5ffff;"></div>
<div style="position:absolute;left:117px;top:597px;width:62px;height:34px;background:#eef3e8;"></div>
<div style="position:absolute;left:179px;top:597px;width:44px;height:34px;background:#eef3e8;"></div>
<div style="position:absolute;left:223px;top:597px;width:57px;height:34px;background:#eef3e8;"></div>
<div style="position:absolute;left:280px;top:597px;width:46px;height:34px;background:#eef3e8;"></div>
<div style="position:absolute;left:326px;top:597px;width:52px;height:34px;background:#eef3e8;"></div>
<div style="position:absolute;left:378px;top:597px;width:76px;height:34px;background:#eef3e8;"></div>
<div style="position:absolute;left:454px;top:597px;width:78px;height:34px;background:#eef3e8;"></div>
<div style="position:absolute;left:532px;top:597px;width:48px;height:34px;background:#eef3e8;"></div>
<div style="position:absolute;left:580px;top:597px;width:48px;height:34px;background:#eef3e8;"></div>
<div style="position:absolute;left:628px;top:597px;width:48px;height:34px;background:#eef3e8;"></div>
<div style="position:absolute;left:676px;top:597px;width:48px;height:34px;background:#eef3e8;"></div>
<div style="position:absolute;left:724px;top:597px;width:48px;height:34px;background:#eef3e8;"></div>
<div style="position:absolute;left:772px;top:597px;width:48px;height:34px;background:#eef3e8;"></div>
<div style="position:absolute;left:820px;top:597px;width:48px;height:34px;background:#eef3e8;"></div>
<div style="position:absolute;left:868px;top:597px;width:48px;height:34px;background:#eef3e8;"></div>
<div style="position:absolute;left:916px;top:597px;width:48px;height:34px;background:#eef3e8;"></div>
<div style="position:absolute;left:964px;top:597px;width:48px;height:34px;background:#eef3e8;"></div>
<div style="position:absolute;left:1012px;top:597px;width:48px;height:34px;background:#eef3e8;"></div>
<div style="position:absolute;left:1060px;top:597px;width:48px;height:34px;background:#eef3e8;"></div>
<div style="position:absolute;left:1108px;top:597px;width:48px;height:34px;background:#eef3e8;"></div>
<div style="position:absolute;left:1156px;top:597px;width:48px;height:34px;background:#eef3e8;"></div>
<div style="position:absolute;left:1204px;top:597px;width:48px;height:34px;background:#eef3e8;"></div>
<div style="position:absolute;left:1252px;top:597px;width:48px;height:34px;background:#eef3e8;"></div>
<div style="position:absolute;left:1300px;top:597px;width:48px;height:34px;background:#eef3e8;"></div>
<div style="position:absolute;left:1348px;top:597px;width:48px;height:34px;background:#eef3e8;"></div>
<div style="position:absolute;left:1396px;top:597px;width:48px;height:34px;background:#eef3e8;"></div>
<div style="position:absolute;left:1444px;top:597px;width:48px;height:34px;background:#eef3e8;"></div>
<div style="position:absolute;left:117px;top:631px;width:62px;height:34px;background:#eef3e8;"></div>
<div style="position:absolute;left:179px;top:631px;width:44px;height:34px;background:#eef3e8;"></div>
<div style="position:absolute;left:223px;top:631px;width:57px;height:34px;background:#eef3e8;"></div>
<div style="position:absolute;left:280px;top:631px;width:46px;height:34px;background:#eef3e8;"></div>
<div style="position:absolute;left:326px;top:631px;width:52px;height:34px;background:#eef3e8;"></div>
<div style="position:absolute;left:378px;top:631px;width:76px;height:34px;background:#eef3e8;"></div>
<div style="position:absolute;left:454px;top:631px;width:78px;height:34px;background:#eef3e8;"></div>
<div style="position:absolute;left:532px;top:631px;width:48px;height:34px;background:#eef3e8;"></div>
<div style="position:absolute;left:580px;top:631px;width:48px;height:34px;background:#eef3e8;"></div>
<div style="position:absolute;left:628px;top:631px;width:48px;height:34px;background:#eef3e8;"></div>
<div style="position:absolute;left:676px;top:631px;width:48px;height:34px;background:#eef3e8;"></div>
<div style="position:absolute;left:724px;top:631px;width:48px;height:34px;background:#eef3e8;"></div>
<div style="position:absolute;left:772px;top:631px;width:48px;height:34px;background:#eef3e8;"></div>
<div style="position:absolute;left:820px;top:631px;width:48px;height:34px;background:#eef3e8;"></div>
<div style="position:absolute;left:868px;top:631px;width:48px;height:34px;background:#eef3e8;"></div>
<div style="position:absolute;left:916px;top:631px;width:48px;height:34px;background:#eef3e8;"></div>
<div style="position:absolute;left:964px;top:631px;width:48px;height:34px;background:#eef3e8;"></div>
<div style="position:absolute;left:1012px;top:631px;width:48px;height:34px;background:#eef3e8;"></div>
<div style="position:absolute;left:1060px;top:631px;width:48px;height:34px;background:#eef3e8;"></div>
<div style="position:absolute;left:1108px;top:631px;width:48px;height:34px;background:#eef3e8;"></div>
<div style="position:absolute;left:1156px;top:631px;width:48px;height:34px;background:#eef3e8;"></div>
<div style="position:absolute;left:1204px;top:631px;width:48px;height:34px;background:#eef3e8;"></div>
<div style="position:absolute;left:1252px;top:631px;width:48px;height:34px;background:#eef3e8;"></div>
<div style="position:absolute;left:1300px;top:631px;width:48px;height:34px;background:#eef3e8;"></div>
<div style="position:absolute;left:1348px;top:631px;width:48px;height:34px;background:#eef3e8;"></div>
<div style="position:absolute;left:1396px;top:631px;width:48px;height:34px;background:#eef3e8;"></div>
<div style="position:absolute;left:1444px;top:631px;width:48px;height:34px;background:#eef3e8;"></div>
<div style="position:absolute;left:53px;top:665px;width:64px;height:25px;background:#f5ffff;"></div>
<div style="position:absolute;left:117px;top:665px;width:62px;height:25px;background:#eef3e8;"></div>
<div style="position:absolute;left:179px;top:665px;width:44px;height:25px;background:#eef3e8;"></div>
<div style="position:absolute;left:223px;top:665px;width:57px;height:25px;background:#eef3e8;"></div>
<div style="position:absolute;left:280px;top:665px;width:46px;height:25px;background:#eef3e8;"></div>
<div style="position:absolute;left:326px;top:665px;width:52px;height:25px;background:#eef3e8;"></div>
<div style="position:absolute;left:378px;top:665px;width:76px;height:25px;background:#eef3e8;"></div>
<div style="position:absolute;left:454px;top:665px;width:78px;height:25px;background:#eef3e8;"></div>
<div style="position:absolute;left:532px;top:665px;width:48px;height:25px;background:#eef3e8;"></div>
<div style="position:absolute;left:580px;top:665px;width:48px;height:25px;background:#eef3e8;"></div>
<div style="position:absolute;left:628px;top:665px;width:48px;height:25px;background:#eef3e8;"></div>
<div style="position:absolute;left:676px;top:665px;width:48px;height:25px;background:#eef3e8;"></div>
<div style="position:absolute;left:724px;top:665px;width:48px;height:25px;background:#eef3e8;"></div>
<div style="position:absolute;left:772px;top:665px;width:48px;height:25px;background:#eef3e8;"></div>
<div style="position:absolute;left:820px;top:665px;width:48px;height:25px;background:#eef3e8;"></div>
<div style="position:absolute;left:868px;top:665px;width:48px;height:25px;background:#eef3e8;"></div>
<div style="position:absolute;left:916px;top:665px;width:48px;height:25px;background:#eef3e8;"></div>
<div style="position:absolute;left:964px;top:665px;width:48px;height:25px;background:#eef3e8;"></div>
<div style="position:absolute;left:1012px;top:665px;width:48px;height:25px;background:#eef3e8;"></div>
<div style="position:absolute;left:1060px;top:665px;width:48px;height:25px;background:#eef3e8;"></div>
<div style="position:absolute;left:1108px;top:665px;width:48px;height:25px;background:#eef3e8;"></div>
<div style="position:absolute;left:1156px;top:665px;width:48px;height:25px;background:#eef3e8;"></div>
<div style="position:absolute;left:1204px;top:665px;width:48px;height:25px;background:#eef3e8;"></div>
<div style="position:absolute;left:1252px;top:665px;width:48px;height:25px;background:#eef3e8;"></div>
<div style="position:absolute;left:1300px;top:665px;width:48px;height:25px;background:#eef3e8;"></div>
<div style="position:absolute;left:1348px;top:665px;width:48px;height:25px;background:#eef3e8;"></div>
<div style="position:absolute;left:1396px;top:665px;width:48px;height:25px;background:#eef3e8;"></div>
<div style="position:absolute;left:1444px;top:665px;width:48px;height:25px;background:#eef3e8;"></div>
<div style="position:absolute;left:117px;top:690px;width:62px;height:20px;background:#eef3e8;"></div>
<div style="position:absolute;left:179px;top:690px;width:44px;height:20px;background:#eef3e8;"></div>
<div style="position:absolute;left:223px;top:690px;width:57px;height:20px;background:#eef3e8;"></div>
<div style="position:absolute;left:280px;top:690px;width:46px;height:20px;background:#eef3e8;"></div>
<div style="position:absolute;left:326px;top:690px;width:52px;height:20px;background:#eef3e8;"></div>
<div style="position:absolute;left:378px;top:690px;width:76px;height:20px;background:#eef3e8;"></div>
<div style="position:absolute;left:454px;top:690px;width:78px;height:20px;background:#eef3e8;"></div>
<div style="position:absolute;left:532px;top:690px;width:48px;height:20px;background:#eef3e8;"></div>
<div style="position:absolute;left:580px;top:690px;width:48px;height:20px;background:#eef3e8;"></div>
<div style="position:absolute;left:628px;top:690px;width:48px;height:20px;background:#eef3e8;"></div>
<div style="position:absolute;left:676px;top:690px;width:48px;height:20px;background:#eef3e8;"></div>
<div style="position:absolute;left:724px;top:690px;width:48px;height:20px;background:#eef3e8;"></div>
<div style="position:absolute;left:772px;top:690px;width:48px;height:20px;background:#eef3e8;"></div>
<div style="position:absolute;left:820px;top:690px;width:48px;height:20px;background:#eef3e8;"></div>
<div style="position:absolute;left:868px;top:690px;width:48px;height:20px;background:#eef3e8;"></div>
<div style="position:absolute;left:916px;top:690px;width:48px;height:20px;background:#eef3e8;"></div>
<div style="position:absolute;left:964px;top:690px;width:48px;height:20px;background:#eef3e8;"></div>
<div style="position:absolute;left:1012px;top:690px;width:48px;height:20px;background:#eef3e8;"></div>
<div style="position:absolute;left:1060px;top:690px;width:48px;height:20px;background:#eef3e8;"></div>
<div style="position:absolute;left:1108px;top:690px;width:48px;height:20px;background:#eef3e8;"></div>
<div style="position:absolute;left:1156px;top:690px;width:48px;height:20px;background:#eef3e8;"></div>
<div style="position:absolute;left:1204px;top:690px;width:48px;height:20px;background:#eef3e8;"></div>
<div style="position:absolute;left:1252px;top:690px;width:48px;height:20px;background:#eef3e8;"></div>
<div style="position:absolute;left:1300px;top:690px;width:48px;height:20px;background:#eef3e8;"></div>
<div style="position:absolute;left:1348px;top:690px;width:48px;height:20px;background:#eef3e8;"></div>
<div style="position:absolute;left:1396px;top:690px;width:48px;height:20px;background:#eef3e8;"></div>
<div style="position:absolute;left:1444px;top:690px;width:48px;height:20px;background:#eef3e8;"></div>
<div style="position:absolute;left:4px;top:710px;width:49px;height:24px;background:#f6e5ef;"></div>
<div style="position:absolute;left:117px;top:710px;width:62px;height:24px;background:#eef3e8;"></div>
<div style="position:absolute;left:179px;top:710px;width:44px;height:24px;background:#eef3e8;"></div>
<div style="position:absolute;left:223px;top:710px;width:57px;height:24px;background:#eef3e8;"></div>
<div style="position:absolute;left:280px;top:710px;width:46px;height:24px;background:#eef3e8;"></div>
<div style="position:absolute;left:326px;top:710px;width:52px;height:24px;background:#eef3e8;"></div>
<div style="position:absolute;left:378px;top:710px;width:76px;height:24px;background:#eef3e8;"></div>
<div style="position:absolute;left:454px;top:710px;width:78px;height:24px;background:#eef3e8;"></div>
<div style="position:absolute;left:532px;top:710px;width:48px;height:24px;background:#eef3e8;"></div>
<div style="position:absolute;left:580px;top:710px;width:48px;height:24px;background:#eef3e8;"></div>
<div style="position:absolute;left:628px;top:710px;width:48px;height:24px;background:#eef3e8;"></div>
<div style="position:absolute;left:676px;top:710px;width:48px;height:24px;background:#eef3e8;"></div>
<div style="position:absolute;left:724px;top:710px;width:48px;height:24px;background:#eef3e8;"></div>
<div style="position:absolute;left:772px;top:710px;width:48px;height:24px;background:#eef3e8;"></div>
<div style="position:absolute;left:820px;top:710px;width:48px;height:24px;background:#eef3e8;"></div>
<div style="position:absolute;left:868px;top:710px;width:48px;height:24px;background:#eef3e8;"></div>
<div style="position:absolute;left:916px;top:710px;width:48px;height:24px;background:#eef3e8;"></div>
<div style="position:absolute;left:964px;top:710px;width:48px;height:24px;background:#eef3e8;"></div>
<div style="position:absolute;left:1012px;top:710px;width:48px;height:24px;background:#eef3e8;"></div>
<div style="position:absolute;left:1060px;top:710px;width:48px;height:24px;background:#eef3e8;"></div>
<div style="position:absolute;left:1108px;top:710px;width:48px;height:24px;background:#eef3e8;"></div>
<div style="position:absolute;left:1156px;top:710px;width:48px;height:24px;background:#eef3e8;"></div>
<div style="position:absolute;left:1204px;top:710px;width:48px;height:24px;background:#eef3e8;"></div>
<div style="position:absolute;left:1252px;top:710px;width:48px;height:24px;background:#eef3e8;"></div>
<div style="position:absolute;left:1300px;top:710px;width:48px;height:24px;background:#eef3e8;"></div>
<div style="position:absolute;left:1348px;top:710px;width:48px;height:24px;background:#eef3e8;"></div>
<div style="position:absolute;left:1396px;top:710px;width:48px;height:24px;background:#eef3e8;"></div>
<div style="position:absolute;left:1444px;top:710px;width:48px;height:24px;background:#eef3e8;"></div>
<div style="position:absolute;left:4px;top:156px;width:1489px;height:1px;background:#a6c9a0;"></div>
<div style="position:absolute;left:4px;top:189px;width:1489px;height:1px;background:#a6c9a0;"></div>
<div style="position:absolute;left:4px;top:223px;width:1489px;height:1px;background:#a6c9a0;"></div>
<div style="position:absolute;left:4px;top:257px;width:1489px;height:1px;background:#a6c9a0;"></div>
<div style="position:absolute;left:4px;top:291px;width:1489px;height:1px;background:#a6c9a0;"></div>
<div style="position:absolute;left:4px;top:325px;width:1489px;height:1px;background:#a6c9a0;"></div>
<div style="position:absolute;left:4px;top:359px;width:1489px;height:1px;background:#a6c9a0;"></div>
<div style="position:absolute;left:4px;top:393px;width:1489px;height:1px;background:#a6c9a0;"></div>
<div style="position:absolute;left:4px;top:427px;width:1489px;height:1px;background:#a6c9a0;"></div>
<div style="position:absolute;left:4px;top:461px;width:1489px;height:1px;background:#a6c9a0;"></div>
<div style="position:absolute;left:4px;top:495px;width:1489px;height:1px;background:#a6c9a0;"></div>
<div style="position:absolute;left:4px;top:529px;width:1489px;height:1px;background:#a6c9a0;"></div>
<div style="position:absolute;left:4px;top:563px;width:1489px;height:1px;background:#a6c9a0;"></div>
<div style="position:absolute;left:4px;top:597px;width:1489px;height:1px;background:#a6c9a0;"></div>
<div style="position:absolute;left:4px;top:631px;width:1489px;height:1px;background:#a6c9a0;"></div>
<div style="position:absolute;left:4px;top:665px;width:1489px;height:1px;background:#a6c9a0;"></div>
<div style="position:absolute;left:4px;top:690px;width:1489px;height:1px;background:#a6c9a0;"></div>
<div style="position:absolute;left:4px;top:710px;width:1489px;height:1px;background:#a6c9a0;"></div>
<div style="position:absolute;left:4px;top:734px;width:1489px;height:1px;background:#a6c9a0;"></div>
<div style="position:absolute;left:4px;top:156px;width:1px;height:579px;background:#a6c9a0;"></div>
<div style="position:absolute;left:53px;top:156px;width:1px;height:579px;background:#a6c9a0;"></div>
<div style="position:absolute;left:117px;top:156px;width:1px;height:579px;background:#a6c9a0;"></div>
<div style="position:absolute;left:179px;top:156px;width:1px;height:579px;background:#a6c9a0;"></div>
<div style="position:absolute;left:223px;top:156px;width:1px;height:579px;background:#a6c9a0;"></div>
<div style="position:absolute;left:280px;top:156px;width:1px;height:579px;background:#a6c9a0;"></div>
<div style="position:absolute;left:326px;top:156px;width:1px;height:579px;background:#a6c9a0;"></div>
<div style="position:absolute;left:378px;top:156px;width:1px;height:579px;background:#a6c9a0;"></div>
<div style="position:absolute;left:454px;top:156px;width:1px;height:579px;background:#a6c9a0;"></div>
<div style="position:absolute;left:532px;top:156px;width:1px;height:579px;background:#a6c9a0;"></div>
<div style="position:absolute;left:580px;top:156px;width:1px;height:579px;background:#a6c9a0;"></div>
<div style="position:absolute;left:628px;top:156px;width:1px;height:579px;background:#a6c9a0;"></div>
<div style="position:absolute;left:676px;top:156px;width:1px;height:579px;background:#a6c9a0;"></div>
<div style="position:absolute;left:724px;top:156px;width:1px;height:579px;background:#a6c9a0;"></div>
<div style="position:absolute;left:772px;top:156px;width:1px;height:579px;background:#a6c9a0;"></div>
<div style="position:absolute;left:820px;top:156px;width:1px;height:579px;background:#a6c9a0;"></div>
<div style="position:absolute;left:868px;top:156px;width:1px;height:579px;background:#a6c9a0;"></div>
<div style="position:absolute;left:916px;top:156px;width:1px;height:579px;background:#a6c9a0;"></div>
<div style="position:absolute;left:964px;top:156px;width:1px;height:579px;background:#a6c9a0;"></div>
<div style="position:absolute;left:1012px;top:156px;width:1px;height:579px;background:#a6c9a0;"></div>
<div style="position:absolute;left:1060px;top:156px;width:1px;height:579px;background:#a6c9a0;"></div>
<div style="position:absolute;left:1108px;top:156px;width:1px;height:579px;background:#a6c9a0;"></div>
<div style="position:absolute;left:1156px;top:156px;width:1px;height:579px;background:#a6c9a0;"></div>
<div style="position:absolute;left:1204px;top:156px;width:1px;height:579px;background:#a6c9a0;"></div>
<div style="position:absolute;left:1252px;top:156px;width:1px;height:579px;background:#a6c9a0;"></div>
<div style="position:absolute;left:1300px;top:156px;width:1px;height:579px;background:#a6c9a0;"></div>
<div style="position:absolute;left:1348px;top:156px;width:1px;height:579px;background:#a6c9a0;"></div>
<div style="position:absolute;left:1396px;top:156px;width:1px;height:579px;background:#a6c9a0;"></div>
<div style="position:absolute;left:1444px;top:156px;width:1px;height:579px;background:#a6c9a0;"></div>
<div style="position:absolute;left:1492px;top:156px;width:1px;height:579px;background:#a6c9a0;"></div>
<div style="position:absolute;left:5px;top:165px;width:48px;line-height:16px;text-align:center;white-space:nowrap;font-size:12px;color:#00007f;text-shadow:0 0 0.25px #00007f;">－</div>
<div style="position:absolute;left:54px;top:165px;width:63px;line-height:16px;text-align:center;white-space:nowrap;font-size:12px;color:#00007f;text-shadow:0 0 0.25px #00007f;">产品编号</div>
<div style="position:absolute;left:118px;top:165px;width:61px;line-height:16px;text-align:center;white-space:nowrap;font-size:12px;color:#00007f;text-shadow:0 0 0.25px #00007f;">订单数量</div>
<div style="position:absolute;left:180px;top:157px;width:43px;line-height:16px;text-align:center;white-space:nowrap;font-size:12px;color:#00007f;font-family:'Liberation Serif',serif;letter-spacing:1.8px;">PCS /</div>
<div style="position:absolute;left:180px;top:173px;width:43px;line-height:16px;text-align:center;white-space:nowrap;font-size:12px;color:#00007f;text-shadow:0 0 0.25px #00007f;">尾数箱</div>
<div style="position:absolute;left:224px;top:165px;width:56px;line-height:16px;text-align:center;white-space:nowrap;font-size:12px;color:#00007f;text-shadow:0 0 0.25px #00007f;">包装数量</div>
<div style="position:absolute;left:281px;top:165px;width:45px;line-height:16px;text-align:center;white-space:nowrap;font-size:12px;color:#00007f;text-shadow:0 0 0.25px #00007f;">总箱数</div>
<div style="position:absolute;left:327px;top:157px;width:51px;line-height:16px;text-align:center;white-space:nowrap;font-size:12px;color:#00007f;text-shadow:0 0 0.25px #00007f;">流水码</div>
<div style="position:absolute;left:327px;top:173px;width:51px;line-height:16px;text-align:center;white-space:nowrap;font-size:12px;color:#00007f;text-shadow:0 0 0.25px #00007f;">前缀</div>
<div style="position:absolute;left:379px;top:165px;width:75px;line-height:16px;text-align:center;white-space:nowrap;font-size:12px;color:#00007f;text-shadow:0 0 0.25px #00007f;">流水号开始</div>
<div style="position:absolute;left:455px;top:165px;width:77px;line-height:16px;text-align:center;white-space:nowrap;font-size:12px;color:#00007f;text-shadow:0 0 0.25px #00007f;">流水号结束</div>
<div style="position:absolute;left:533px;top:157px;width:47px;line-height:16px;text-align:center;white-space:nowrap;font-size:12px;color:#00007f;text-shadow:0 0 0.25px #00007f;">流水号</div>
<div style="position:absolute;left:533px;top:173px;width:47px;line-height:16px;text-align:center;white-space:nowrap;font-size:11px;color:#00007f;text-shadow:0 0 0.3px #00007f;">001</div>
<div style="position:absolute;left:581px;top:157px;width:47px;line-height:16px;text-align:center;white-space:nowrap;font-size:12px;color:#00007f;text-shadow:0 0 0.25px #00007f;">流水号</div>
<div style="position:absolute;left:581px;top:173px;width:47px;line-height:16px;text-align:center;white-space:nowrap;font-size:11px;color:#00007f;text-shadow:0 0 0.3px #00007f;">002</div>
<div style="position:absolute;left:629px;top:157px;width:47px;line-height:16px;text-align:center;white-space:nowrap;font-size:12px;color:#00007f;text-shadow:0 0 0.25px #00007f;">流水号</div>
<div style="position:absolute;left:629px;top:173px;width:47px;line-height:16px;text-align:center;white-space:nowrap;font-size:11px;color:#00007f;text-shadow:0 0 0.3px #00007f;">003</div>
<div style="position:absolute;left:677px;top:157px;width:47px;line-height:16px;text-align:center;white-space:nowrap;font-size:12px;color:#00007f;text-shadow:0 0 0.25px #00007f;">流水号</div>
<div style="position:absolute;left:677px;top:173px;width:47px;line-height:16px;text-align:center;white-space:nowrap;font-size:11px;color:#00007f;text-shadow:0 0 0.3px #00007f;">004</div>
<div style="position:absolute;left:725px;top:157px;width:47px;line-height:16px;text-align:center;white-space:nowrap;font-size:12px;color:#00007f;text-shadow:0 0 0.25px #00007f;">流水号</div>
<div style="position:absolute;left:725px;top:173px;width:47px;line-height:16px;text-align:center;white-space:nowrap;font-size:11px;color:#00007f;text-shadow:0 0 0.3px #00007f;">005</div>
<div style="position:absolute;left:773px;top:157px;width:47px;line-height:16px;text-align:center;white-space:nowrap;font-size:12px;color:#00007f;text-shadow:0 0 0.25px #00007f;">流水号</div>
<div style="position:absolute;left:773px;top:173px;width:47px;line-height:16px;text-align:center;white-space:nowrap;font-size:11px;color:#00007f;text-shadow:0 0 0.3px #00007f;">006</div>
<div style="position:absolute;left:821px;top:157px;width:47px;line-height:16px;text-align:center;white-space:nowrap;font-size:12px;color:#00007f;text-shadow:0 0 0.25px #00007f;">流水号</div>
<div style="position:absolute;left:821px;top:173px;width:47px;line-height:16px;text-align:center;white-space:nowrap;font-size:11px;color:#00007f;text-shadow:0 0 0.3px #00007f;">007</div>
<div style="position:absolute;left:869px;top:157px;width:47px;line-height:16px;text-align:center;white-space:nowrap;font-size:12px;color:#00007f;text-shadow:0 0 0.25px #00007f;">流水号</div>
<div style="position:absolute;left:869px;top:173px;width:47px;line-height:16px;text-align:center;white-space:nowrap;font-size:11px;color:#00007f;text-shadow:0 0 0.3px #00007f;">008</div>
<div style="position:absolute;left:917px;top:157px;width:47px;line-height:16px;text-align:center;white-space:nowrap;font-size:12px;color:#00007f;text-shadow:0 0 0.25px #00007f;">流水号</div>
<div style="position:absolute;left:917px;top:173px;width:47px;line-height:16px;text-align:center;white-space:nowrap;font-size:11px;color:#00007f;text-shadow:0 0 0.3px #00007f;">009</div>
<div style="position:absolute;left:965px;top:157px;width:47px;line-height:16px;text-align:center;white-space:nowrap;font-size:12px;color:#00007f;text-shadow:0 0 0.25px #00007f;">流水号</div>
<div style="position:absolute;left:965px;top:173px;width:47px;line-height:16px;text-align:center;white-space:nowrap;font-size:11px;color:#00007f;text-shadow:0 0 0.3px #00007f;">010</div>
<div style="position:absolute;left:1013px;top:157px;width:47px;line-height:16px;text-align:center;white-space:nowrap;font-size:12px;color:#00007f;text-shadow:0 0 0.25px #00007f;">流水号</div>
<div style="position:absolute;left:1013px;top:173px;width:47px;line-height:16px;text-align:center;white-space:nowrap;font-size:11px;color:#00007f;text-shadow:0 0 0.3px #00007f;">011</div>
<div style="position:absolute;left:1061px;top:157px;width:47px;line-height:16px;text-align:center;white-space:nowrap;font-size:12px;color:#00007f;text-shadow:0 0 0.25px #00007f;">流水号</div>
<div style="position:absolute;left:1061px;top:173px;width:47px;line-height:16px;text-align:center;white-space:nowrap;font-size:11px;color:#00007f;text-shadow:0 0 0.3px #00007f;">012</div>
<div style="position:absolute;left:1109px;top:157px;width:47px;line-height:16px;text-align:center;white-space:nowrap;font-size:12px;color:#00007f;text-shadow:0 0 0.25px #00007f;">流水号</div>
<div style="position:absolute;left:1109px;top:173px;width:47px;line-height:16px;text-align:center;white-space:nowrap;font-size:11px;color:#00007f;text-shadow:0 0 0.3px #00007f;">013</div>
<div style="position:absolute;left:1157px;top:157px;width:47px;line-height:16px;text-align:center;white-space:nowrap;font-size:12px;color:#00007f;text-shadow:0 0 0.25px #00007f;">流水号</div>
<div style="position:absolute;left:1157px;top:173px;width:47px;line-height:16px;text-align:center;white-space:nowrap;font-size:11px;color:#00007f;text-shadow:0 0 0.3px #00007f;">014</div>
<div style="position:absolute;left:1205px;top:157px;width:47px;line-height:16px;text-align:center;white-space:nowrap;font-size:12px;color:#00007f;text-shadow:0 0 0.25px #00007f;">流水号</div>
<div style="position:absolute;left:1205px;top:173px;width:47px;line-height:16px;text-align:center;white-space:nowrap;font-size:11px;color:#00007f;text-shadow:0 0 0.3px #00007f;">015</div>
<div style="position:absolute;left:1253px;top:157px;width:47px;line-height:16px;text-align:center;white-space:nowrap;font-size:12px;color:#00007f;text-shadow:0 0 0.25px #00007f;">流水号</div>
<div style="position:absolute;left:1253px;top:173px;width:47px;line-height:16px;text-align:center;white-space:nowrap;font-size:11px;color:#00007f;text-shadow:0 0 0.3px #00007f;">016</div>
<div style="position:absolute;left:1349px;top:157px;width:47px;line-height:16px;text-align:center;white-space:nowrap;font-size:12px;color:#00007f;text-shadow:0 0 0.25px #00007f;">流水号</div>
<div style="position:absolute;left:1349px;top:173px;width:47px;line-height:16px;text-align:center;white-space:nowrap;font-size:11px;color:#00007f;text-shadow:0 0 0.3px #00007f;">018</div>
<div style="position:absolute;left:1397px;top:157px;width:47px;line-height:16px;text-align:center;white-space:nowrap;font-size:12px;color:#00007f;text-shadow:0 0 0.25px #00007f;">流水号</div>
<div style="position:absolute;left:1397px;top:173px;width:47px;line-height:16px;text-align:center;white-space:nowrap;font-size:11px;color:#00007f;text-shadow:0 0 0.3px #00007f;">019</div>
<div style="position:absolute;left:1445px;top:157px;width:47px;line-height:16px;text-align:center;white-space:nowrap;font-size:12px;color:#00007f;text-shadow:0 0 0.25px #00007f;">流水号</div>
<div style="position:absolute;left:1445px;top:173px;width:47px;line-height:16px;text-align:center;white-space:nowrap;font-size:11px;color:#00007f;text-shadow:0 0 0.3px #00007f;">020</div>
<div style="position:absolute;left:5px;top:199px;width:48px;line-height:14px;text-align:center;white-space:nowrap;font-size:11px;color:#00007f;">43</div>
<div style="position:absolute;left:58px;top:199px;line-height:14px;text-align:left;white-space:nowrap;font-size:11px;color:#000;font-family:'Liberation Serif',serif;">HI</div>
<div style="position:absolute;left:117px;top:199px;width:59px;line-height:14px;text-align:right;white-space:nowrap;font-size:11px;color:#262626;">1000</div>
<div style="position:absolute;left:183px;top:199px;line-height:14px;text-align:left;white-space:nowrap;font-size:11px;color:#262626;">10</div>
<div style="position:absolute;left:227px;top:199px;line-height:14px;text-align:left;white-space:nowrap;font-size:11px;color:#262626;">18</div>
<div style="position:absolute;left:284px;top:199px;line-height:14px;text-align:left;white-space:nowrap;font-size:11px;color:#262626;">56</div>
<div style="position:absolute;left:330px;top:199px;line-height:14px;text-align:left;white-space:nowrap;font-size:11px;color:#262626;">8366328</div>
<div style="position:absolute;left:378px;top:199px;width:73px;line-height:14px;text-align:right;white-space:nowrap;font-size:11px;color:#262626;">00757</div>
<div style="position:absolute;left:458px;top:199px;line-height:14px;text-align:left;white-space:nowrap;font-size:11px;color:#262626;">00774</div>
<div style="position:absolute;left:536px;top:190px;line-height:16px;text-align:left;white-space:nowrap;font-size:11px;color:#262626;">836632<br>800757</div>
<div style="position:absolute;left:584px;top:190px;line-height:16px;text-align:left;white-space:nowrap;font-size:11px;color:#262626;">836632<br>800758</div>
<div style="position:absolute;left:632px;top:190px;line-height:16px;text-align:left;white-space:nowrap;font-size:11px;color:#262626;">836632<br>800759</div>
<div style="position:absolute;left:680px;top:190px;line-height:16px;text-align:left;white-space:nowrap;font-size:11px;color:#262626;">836632<br>800760</div>
<div style="position:absolute;left:728px;top:190px;line-height:16px;text-align:left;white-space:nowrap;font-size:11px;color:#262626;">836632<br>800761</div>
<div style="position:absolute;left:776px;top:190px;line-height:16px;text-align:left;white-space:nowrap;font-size:11px;color:#262626;">836632<br>800762</div>
<div style="position:absolute;left:824px;top:190px;line-height:16px;text-align:left;white-space:nowrap;font-size:11px;color:#262626;">836632<br>800763</div>
<div style="position:absolute;left:872px;top:190px;line-height:16px;text-align:left;white-space:nowrap;font-size:11px;color:#262626;">836632<br>800764</div>
<div style="position:absolute;left:920px;top:190px;line-height:16px;text-align:left;white-space:nowrap;font-size:11px;color:#262626;">836632<br>800765</div>
<div style="position:absolute;left:968px;top:190px;line-height:16px;text-align:left;white-space:nowrap;font-size:11px;color:#262626;">836632<br>800766</div>
<div style="position:absolute;left:1016px;top:190px;line-height:16px;text-align:left;white-space:nowrap;font-size:11px;color:#262626;">836632<br>800767</div>
<div style="position:absolute;left:1064px;top:190px;line-height:16px;text-align:left;white-space:nowrap;font-size:11px;color:#262626;">836632<br>800768</div>
<div style="position:absolute;left:1112px;top:190px;line-height:16px;text-align:left;white-space:nowrap;font-size:11px;color:#262626;">836632<br>800769</div>
<div style="position:absolute;left:1160px;top:190px;line-height:16px;text-align:left;white-space:nowrap;font-size:11px;color:#262626;">836632<br>800770</div>
<div style="position:absolute;left:1208px;top:190px;line-height:16px;text-align:left;white-space:nowrap;font-size:11px;color:#262626;">836632<br>800771</div>
<div style="position:absolute;left:1256px;top:190px;line-height:16px;text-align:left;white-space:nowrap;font-size:11px;color:#262626;">836632<br>800772</div>
<div style="position:absolute;left:1304px;top:190px;line-height:16px;text-align:left;white-space:nowrap;font-size:11px;color:#262626;">836632<br>800773</div>
<div style="position:absolute;left:1352px;top:190px;line-height:16px;text-align:left;white-space:nowrap;font-size:11px;color:#262626;">836632<br>800774</div>
<div style="position:absolute;left:5px;top:233px;width:48px;line-height:14px;text-align:center;white-space:nowrap;font-size:11px;color:#00007f;">44</div>
<div style="position:absolute;left:58px;top:233px;line-height:14px;text-align:left;white-space:nowrap;font-size:11px;color:#000;font-family:'Liberation Serif',serif;">HI</div>
<div style="position:absolute;left:117px;top:233px;width:59px;line-height:14px;text-align:right;white-space:nowrap;font-size:11px;color:#262626;">1000</div>
<div style="position:absolute;left:183px;top:233px;line-height:14px;text-align:left;white-space:nowrap;font-size:11px;color:#262626;">10</div>
<div style="position:absolute;left:227px;top:233px;line-height:14px;text-align:left;white-space:nowrap;font-size:11px;color:#262626;">18</div>
<div style="position:absolute;left:284px;top:233px;line-height:14px;text-align:left;white-space:nowrap;font-size:11px;color:#262626;">56</div>
<div style="position:absolute;left:330px;top:233px;line-height:14px;text-align:left;white-space:nowrap;font-size:11px;color:#262626;">8366328</div>
<div style="position:absolute;left:378px;top:233px;width:73px;line-height:14px;text-align:right;white-space:nowrap;font-size:11px;color:#262626;">00775</div>
<div style="position:absolute;left:458px;top:233px;line-height:14px;text-align:left;white-space:nowrap;font-size:11px;color:#262626;">00792</div>
<div style="position:absolute;left:536px;top:224px;line-height:16px;text-align:left;white-space:nowrap;font-size:11px;color:#262626;">836632<br>800775</div>
<div style="position:absolute;left:584px;top:224px;line-height:16px;text-align:left;white-space:nowrap;font-size:11px;color:#262626;">836632<br>800776</div>
<div style="position:absolute;left:632px;top:224px;line-height:16px;text-align:left;white-space:nowrap;font-size:11px;color:#262626;">836632<br>800777</div>
<div style="position:absolute;left:680px;top:224px;line-height:16px;text-align:left;white-space:nowrap;font-size:11px;color:#262626;">836632<br>800778</div>
<div style="position:absolute;left:728px;top:224px;line-height:16px;text-align:left;white-space:nowrap;font-size:11px;color:#262626;">836632<br>800779</div>
<div style="position:absolute;left:776px;top:224px;line-height:16px;text-align:left;white-space:nowrap;font-size:11px;color:#262626;">836632<br>800780</div>
<div style="position:absolute;left:824px;top:224px;line-height:16px;text-align:left;white-space:nowrap;font-size:11px;color:#262626;">836632<br>800781</div>
<div style="position:absolute;left:872px;top:224px;line-height:16px;text-align:left;white-space:nowrap;font-size:11px;color:#262626;">836632<br>800782</div>
<div style="position:absolute;left:920px;top:224px;line-height:16px;text-align:left;white-space:nowrap;font-size:11px;color:#262626;">836632<br>800783</div>
<div style="position:absolute;left:968px;top:224px;line-height:16px;text-align:left;white-space:nowrap;font-size:11px;color:#262626;">836632<br>800784</div>
<div style="position:absolute;left:1016px;top:224px;line-height:16px;text-align:left;white-space:nowrap;font-size:11px;color:#262626;">836632<br>800785</div>
<div style="position:absolute;left:1064px;top:224px;line-height:16px;text-align:left;white-space:nowrap;font-size:11px;color:#262626;">836632<br>800786</div>
<div style="position:absolute;left:1112px;top:224px;line-height:16px;text-align:left;white-space:nowrap;font-size:11px;color:#262626;">836632<br>800787</div>
<div style="position:absolute;left:1160px;top:224px;line-height:16px;text-align:left;white-space:nowrap;font-size:11px;color:#262626;">836632<br>800788</div>
<div style="position:absolute;left:1208px;top:224px;line-height:16px;text-align:left;white-space:nowrap;font-size:11px;color:#262626;">836632<br>800789</div>
<div style="position:absolute;left:1256px;top:224px;line-height:16px;text-align:left;white-space:nowrap;font-size:11px;color:#262626;">836632<br>800790</div>
<div style="position:absolute;left:1304px;top:224px;line-height:16px;text-align:left;white-space:nowrap;font-size:11px;color:#262626;">836632<br>800791</div>
<div style="position:absolute;left:1352px;top:224px;line-height:16px;text-align:left;white-space:nowrap;font-size:11px;color:#262626;">836632<br>800792</div>
<div style="position:absolute;left:5px;top:267px;width:48px;line-height:14px;text-align:center;white-space:nowrap;font-size:11px;color:#00007f;">45</div>
<div style="position:absolute;left:58px;top:267px;line-height:14px;text-align:left;white-space:nowrap;font-size:11px;color:#000;font-family:'Liberation Serif',serif;">HI</div>
<div style="position:absolute;left:117px;top:267px;width:59px;line-height:14px;text-align:right;white-space:nowrap;font-size:11px;color:#262626;">1000</div>
<div style="position:absolute;left:183px;top:267px;line-height:14px;text-align:left;white-space:nowrap;font-size:11px;color:#262626;">10</div>
<div style="position:absolute;left:227px;top:267px;line-height:14px;text-align:left;white-space:nowrap;font-size:11px;color:#262626;">18</div>
<div style="position:absolute;left:284px;top:267px;line-height:14px;text-align:left;white-space:nowrap;font-size:11px;color:#262626;">56</div>
<div style="position:absolute;left:330px;top:267px;line-height:14px;text-align:left;white-space:nowrap;font-size:11px;color:#262626;">8366328</div>
<div style="position:absolute;left:378px;top:267px;width:73px;line-height:14px;text-align:right;white-space:nowrap;font-size:11px;color:#262626;">00793</div>
<div style="position:absolute;left:458px;top:267px;line-height:14px;text-align:left;white-space:nowrap;font-size:11px;color:#262626;">00810</div>
<div style="position:absolute;left:536px;top:258px;line-height:16px;text-align:left;white-space:nowrap;font-size:11px;color:#262626;">836632<br>800793</div>
<div style="position:absolute;left:584px;top:258px;line-height:16px;text-align:left;white-space:nowrap;font-size:11px;color:#262626;">836632<br>800794</div>
<div style="position:absolute;left:632px;top:258px;line-height:16px;text-align:left;white-space:nowrap;font-size:11px;color:#262626;">836632<br>800795</div>
<div style="position:absolute;left:680px;top:258px;line-height:16px;text-align:left;white-space:nowrap;font-size:11px;color:#262626;">836632<br>800796</div>
<div style="position:absolute;left:728px;top:258px;line-height:16px;text-align:left;white-space:nowrap;font-size:11px;color:#262626;">836632<br>800797</div>
<div style="position:absolute;left:776px;top:258px;line-height:16px;text-align:left;white-space:nowrap;font-size:11px;color:#262626;">836632<br>800798</div>
<div style="position:absolute;left:824px;top:258px;line-height:16px;text-align:left;white-space:nowrap;font-size:11px;color:#262626;">836632<br>800799</div>
<div style="position:absolute;left:872px;top:258px;line-height:16px;text-align:left;white-space:nowrap;font-size:11px;color:#262626;">836632<br>800800</div>
<div style="position:absolute;left:920px;top:258px;line-height:16px;text-align:left;white-space:nowrap;font-size:11px;color:#262626;">836632<br>800801</div>
<div style="position:absolute;left:968px;top:258px;line-height:16px;text-align:left;white-space:nowrap;font-size:11px;color:#262626;">836632<br>800802</div>
<div style="position:absolute;left:1016px;top:258px;line-height:16px;text-align:left;white-space:nowrap;font-size:11px;color:#262626;">836632<br>800803</div>
<div style="position:absolute;left:1064px;top:258px;line-height:16px;text-align:left;white-space:nowrap;font-size:11px;color:#262626;">836632<br>800804</div>
<div style="position:absolute;left:1112px;top:258px;line-height:16px;text-align:left;white-space:nowrap;font-size:11px;color:#262626;">836632<br>800805</div>
<div style="position:absolute;left:1160px;top:258px;line-height:16px;text-align:left;white-space:nowrap;font-size:11px;color:#262626;">836632<br>800806</div>
<div style="position:absolute;left:1208px;top:258px;line-height:16px;text-align:left;white-space:nowrap;font-size:11px;color:#262626;">836632<br>800807</div>
<div style="position:absolute;left:1256px;top:258px;line-height:16px;text-align:left;white-space:nowrap;font-size:11px;color:#262626;">836632<br>800808</div>
<div style="position:absolute;left:1304px;top:258px;line-height:16px;text-align:left;white-space:nowrap;font-size:11px;color:#262626;">836632<br>800809</div>
<div style="position:absolute;left:1352px;top:258px;line-height:16px;text-align:left;white-space:nowrap;font-size:11px;color:#262626;">836632<br>800810</div>
<div style="position:absolute;left:5px;top:301px;width:48px;line-height:14px;text-align:center;white-space:nowrap;font-size:11px;color:#00007f;">46</div>
<div style="position:absolute;left:58px;top:301px;line-height:14px;text-align:left;white-space:nowrap;font-size:11px;color:#000;font-family:'Liberation Serif',serif;">HI</div>
<div style="position:absolute;left:117px;top:301px;width:59px;line-height:14px;text-align:right;white-space:nowrap;font-size:11px;color:#262626;">1000</div>
<div style="position:absolute;left:183px;top:301px;line-height:14px;text-align:left;white-space:nowrap;font-size:11px;color:#262626;">10</div>
<div style="position:absolute;left:227px;top:301px;line-height:14px;text-align:left;white-space:nowrap;font-size:11px;color:#262626;">18</div>
<div style="position:absolute;left:284px;top:301px;line-height:14px;text-align:left;white-space:nowrap;font-size:11px;color:#262626;">56</div>
<div style="position:absolute;left:330px;top:301px;line-height:14px;text-align:left;white-space:nowrap;font-size:11px;color:#262626;">8366328</div>
<div style="position:absolute;left:378px;top:301px;width:73px;line-height:14px;text-align:right;white-space:nowrap;font-size:11px;color:#262626;">00811</div>
<div style="position:absolute;left:458px;top:301px;line-height:14px;text-align:left;white-space:nowrap;font-size:11px;color:#262626;">00828</div>
<div style="position:absolute;left:536px;top:292px;line-height:16px;text-align:left;white-space:nowrap;font-size:11px;color:#262626;">836632<br>800811</div>
<div style="position:absolute;left:584px;top:292px;line-height:16px;text-align:left;white-space:nowrap;font-size:11px;color:#262626;">836632<br>800812</div>
<div style="position:absolute;left:632px;top:292px;line-height:16px;text-align:left;white-space:nowrap;font-size:11px;color:#262626;">836632<br>800813</div>
<div style="position:absolute;left:680px;top:292px;line-height:16px;text-align:left;white-space:nowrap;font-size:11px;color:#262626;">836632<br>800814</div>
<div style="position:absolute;left:728px;top:292px;line-height:16px;text-align:left;white-space:nowrap;font-size:11px;color:#262626;">836632<br>800815</div>
<div style="position:absolute;left:776px;top:292px;line-height:16px;text-align:left;white-space:nowrap;font-size:11px;color:#262626;">836632<br>800816</div>
<div style="position:absolute;left:824px;top:292px;line-height:16px;text-align:left;white-space:nowrap;font-size:11px;color:#262626;">836632<br>800817</div>
<div style="position:absolute;left:872px;top:292px;line-height:16px;text-align:left;white-space:nowrap;font-size:11px;color:#262626;">836632<br>800818</div>
<div style="position:absolute;left:920px;top:292px;line-height:16px;text-align:left;white-space:nowrap;font-size:11px;color:#262626;">836632<br>800819</div>
<div style="position:absolute;left:968px;top:292px;line-height:16px;text-align:left;white-space:nowrap;font-size:11px;color:#262626;">836632<br>800820</div>
<div style="position:absolute;left:1016px;top:292px;line-height:16px;text-align:left;white-space:nowrap;font-size:11px;color:#262626;">836632<br>800821</div>
<div style="position:absolute;left:1064px;top:292px;line-height:16px;text-align:left;white-space:nowrap;font-size:11px;color:#262626;">836632<br>800822</div>
<div style="position:absolute;left:1112px;top:292px;line-height:16px;text-align:left;white-space:nowrap;font-size:11px;color:#262626;">836632<br>800823</div>
<div style="position:absolute;left:1160px;top:292px;line-height:16px;text-align:left;white-space:nowrap;font-size:11px;color:#262626;">836632<br>800824</div>
<div style="position:absolute;left:1208px;top:292px;line-height:16px;text-align:left;white-space:nowrap;font-size:11px;color:#262626;">836632<br>800825</div>
<div style="position:absolute;left:1256px;top:292px;line-height:16px;text-align:left;white-space:nowrap;font-size:11px;color:#262626;">836632<br>800826</div>
<div style="position:absolute;left:1304px;top:292px;line-height:16px;text-align:left;white-space:nowrap;font-size:11px;color:#262626;">836632<br>800827</div>
<div style="position:absolute;left:1352px;top:292px;line-height:16px;text-align:left;white-space:nowrap;font-size:11px;color:#262626;">836632<br>800828</div>
<div style="position:absolute;left:5px;top:335px;width:48px;line-height:14px;text-align:center;white-space:nowrap;font-size:11px;color:#00007f;">47</div>
<div style="position:absolute;left:58px;top:335px;line-height:14px;text-align:left;white-space:nowrap;font-size:11px;color:#000;font-family:'Liberation Serif',serif;">HI</div>
<div style="position:absolute;left:117px;top:335px;width:59px;line-height:14px;text-align:right;white-space:nowrap;font-size:11px;color:#262626;">1000</div>
<div style="position:absolute;left:183px;top:335px;line-height:14px;text-align:left;white-space:nowrap;font-size:11px;color:#262626;">10</div>
<div style="position:absolute;left:227px;top:335px;line-height:14px;text-align:left;white-space:nowrap;font-size:11px;color:#262626;">18</div>
<div style="position:absolute;left:284px;top:335px;line-height:14px;text-align:left;white-space:nowrap;font-size:11px;color:#262626;">56</div>
<div style="position:absolute;left:330px;top:335px;line-height:14px;text-align:left;white-space:nowrap;font-size:11px;color:#262626;">8366328</div>
<div style="position:absolute;left:378px;top:335px;width:73px;line-height:14px;text-align:right;white-space:nowrap;font-size:11px;color:#262626;">00829</div>
<div style="position:absolute;left:458px;top:335px;line-height:14px;text-align:left;white-space:nowrap;font-size:11px;color:#262626;">00846</div>
<div style="position:absolute;left:536px;top:326px;line-height:16px;text-align:left;white-space:nowrap;font-size:11px;color:#262626;">836632<br>800829</div>
<div style="position:absolute;left:584px;top:326px;line-height:16px;text-align:left;white-space:nowrap;font-size:11px;color:#262626;">836632<br>800830</div>
<div style="position:absolute;left:632px;top:326px;line-height:16px;text-align:left;white-space:nowrap;font-size:11px;color:#262626;">836632<br>800831</div>
<div style="position:absolute;left:680px;top:326px;line-height:16px;text-align:left;white-space:nowrap;font-size:11px;color:#262626;">836632<br>800832</div>
<div style="position:absolute;left:728px;top:326px;line-height:16px;text-align:left;white-space:nowrap;font-size:11px;color:#262626;">836632<br>800833</div>
<div style="position:absolute;left:776px;top:326px;line-height:16px;text-align:left;white-space:nowrap;font-size:11px;color:#262626;">836632<br>800834</div>
<div style="position:absolute;left:824px;top:326px;line-height:16px;text-align:left;white-space:nowrap;font-size:11px;color:#262626;">836632<br>800835</div>
<div style="position:absolute;left:872px;top:326px;line-height:16px;text-align:left;white-space:nowrap;font-size:11px;color:#262626;">836632<br>800836</div>
<div style="position:absolute;left:920px;top:326px;line-height:16px;text-align:left;white-space:nowrap;font-size:11px;color:#262626;">836632<br>800837</div>
<div style="position:absolute;left:968px;top:326px;line-height:16px;text-align:left;white-space:nowrap;font-size:11px;color:#262626;">836632<br>800838</div>
<div style="position:absolute;left:1016px;top:326px;line-height:16px;text-align:left;white-space:nowrap;font-size:11px;color:#262626;">836632<br>800839</div>
<div style="position:absolute;left:1064px;top:326px;line-height:16px;text-align:left;white-space:nowrap;font-size:11px;color:#262626;">836632<br>800840</div>
<div style="position:absolute;left:1112px;top:326px;line-height:16px;text-align:left;white-space:nowrap;font-size:11px;color:#262626;">836632<br>800841</div>
<div style="position:absolute;left:1160px;top:326px;line-height:16px;text-align:left;white-space:nowrap;font-size:11px;color:#262626;">836632<br>800842</div>
<div style="position:absolute;left:1208px;top:326px;line-height:16px;text-align:left;white-space:nowrap;font-size:11px;color:#262626;">836632<br>800843</div>
<div style="position:absolute;left:1256px;top:326px;line-height:16px;text-align:left;white-space:nowrap;font-size:11px;color:#262626;">836632<br>800844</div>
<div style="position:absolute;left:1304px;top:326px;line-height:16px;text-align:left;white-space:nowrap;font-size:11px;color:#262626;">836632<br>800845</div>
<div style="position:absolute;left:1352px;top:326px;line-height:16px;text-align:left;white-space:nowrap;font-size:11px;color:#262626;">836632<br>800846</div>
<div style="position:absolute;left:5px;top:369px;width:48px;line-height:14px;text-align:center;white-space:nowrap;font-size:11px;color:#00007f;">48</div>
<div style="position:absolute;left:58px;top:369px;line-height:14px;text-align:left;white-space:nowrap;font-size:11px;color:#000;font-family:'Liberation Serif',serif;">HI</div>
<div style="position:absolute;left:117px;top:369px;width:59px;line-height:14px;text-align:right;white-space:nowrap;font-size:11px;color:#262626;">1000</div>
<div style="position:absolute;left:183px;top:369px;line-height:14px;text-align:left;white-space:nowrap;font-size:11px;color:#262626;">10</div>
<div style="position:absolute;left:227px;top:369px;line-height:14px;text-align:left;white-space:nowrap;font-size:11px;color:#262626;">18</div>
<div style="position:absolute;left:284px;top:369px;line-height:14px;text-align:left;white-space:nowrap;font-size:11px;color:#262626;">56</div>
<div style="position:absolute;left:330px;top:369px;line-height:14px;text-align:left;white-space:nowrap;font-size:11px;color:#262626;">8366328</div>
<div style="position:absolute;left:378px;top:369px;width:73px;line-height:14px;text-align:right;white-space:nowrap;font-size:11px;color:#262626;">00847</div>
<div style="position:absolute;left:458px;top:369px;line-height:14px;text-align:left;white-space:nowrap;font-size:11px;color:#262626;">00864</div>
<div style="position:absolute;left:536px;top:360px;line-height:16px;text-align:left;white-space:nowrap;font-size:11px;color:#262626;">836632<br>800847</div>
<div style="position:absolute;left:584px;top:360px;line-height:16px;text-align:left;white-space:nowrap;font-size:11px;color:#262626;">836632<br>800848</div>
<div style="position:absolute;left:632px;top:360px;line-height:16px;text-align:left;white-space:nowrap;font-size:11px;color:#262626;">836632<br>800849</div>
<div style="position:absolute;left:680px;top:360px;line-height:16px;text-align:left;white-space:nowrap;font-size:11px;color:#262626;">836632<br>800850</div>
<div style="position:absolute;left:728px;top:360px;line-height:16px;text-align:left;white-space:nowrap;font-size:11px;color:#262626;">836632<br>800851</div>
<div style="position:absolute;left:776px;top:360px;line-height:16px;text-align:left;white-space:nowrap;font-size:11px;color:#262626;">836632<br>800852</div>
<div style="position:absolute;left:824px;top:360px;line-height:16px;text-align:left;white-space:nowrap;font-size:11px;color:#262626;">836632<br>800853</div>
<div style="position:absolute;left:872px;top:360px;line-height:16px;text-align:left;white-space:nowrap;font-size:11px;color:#262626;">836632<br>800854</div>
<div style="position:absolute;left:920px;top:360px;line-height:16px;text-align:left;white-space:nowrap;font-size:11px;color:#262626;">836632<br>800855</div>
<div style="position:absolute;left:968px;top:360px;line-height:16px;text-align:left;white-space:nowrap;font-size:11px;color:#262626;">836632<br>800856</div>
<div style="position:absolute;left:1016px;top:360px;line-height:16px;text-align:left;white-space:nowrap;font-size:11px;color:#262626;">836632<br>800857</div>
<div style="position:absolute;left:1064px;top:360px;line-height:16px;text-align:left;white-space:nowrap;font-size:11px;color:#262626;">836632<br>800858</div>
<div style="position:absolute;left:1112px;top:360px;line-height:16px;text-align:left;white-space:nowrap;font-size:11px;color:#262626;">836632<br>800859</div>
<div style="position:absolute;left:1160px;top:360px;line-height:16px;text-align:left;white-space:nowrap;font-size:11px;color:#262626;">836632<br>800860</div>
<div style="position:absolute;left:1208px;top:360px;line-height:16px;text-align:left;white-space:nowrap;font-size:11px;color:#262626;">836632<br>800861</div>
<div style="position:absolute;left:1256px;top:360px;line-height:16px;text-align:left;white-space:nowrap;font-size:11px;color:#262626;">836632<br>800862</div>
<div style="position:absolute;left:1304px;top:360px;line-height:16px;text-align:left;white-space:nowrap;font-size:11px;color:#262626;">836632<br>800863</div>
<div style="position:absolute;left:1352px;top:360px;line-height:16px;text-align:left;white-space:nowrap;font-size:11px;color:#262626;">836632<br>800864</div>
<div style="position:absolute;left:5px;top:403px;width:48px;line-height:14px;text-align:center;white-space:nowrap;font-size:11px;color:#00007f;">49</div>
<div style="position:absolute;left:58px;top:403px;line-height:14px;text-align:left;white-space:nowrap;font-size:11px;color:#000;font-family:'Liberation Serif',serif;">HI</div>
<div style="position:absolute;left:117px;top:403px;width:59px;line-height:14px;text-align:right;white-space:nowrap;font-size:11px;color:#262626;">1000</div>
<div style="position:absolute;left:183px;top:403px;line-height:14px;text-align:left;white-space:nowrap;font-size:11px;color:#262626;">10</div>
<div style="position:absolute;left:227px;top:403px;line-height:14px;text-align:left;white-space:nowrap;font-size:11px;color:#262626;">18</div>
<div style="position:absolute;left:284px;top:403px;line-height:14px;text-align:left;white-space:nowrap;font-size:11px;color:#262626;">56</div>
<div style="position:absolute;left:330px;top:403px;line-height:14px;text-align:left;white-space:nowrap;font-size:11px;color:#262626;">8366328</div>
<div style="position:absolute;left:378px;top:403px;width:73px;line-height:14px;text-align:right;white-space:nowrap;font-size:11px;color:#262626;">00865</div>
<div style="position:absolute;left:458px;top:403px;line-height:14px;text-align:left;white-space:nowrap;font-size:11px;color:#262626;">00882</div>
<div style="position:absolute;left:536px;top:394px;line-height:16px;text-align:left;white-space:nowrap;font-size:11px;color:#262626;">836632<br>800865</div>
<div style="position:absolute;left:584px;top:394px;line-height:16px;text-align:left;white-space:nowrap;font-size:11px;color:#262626;">836632<br>800866</div>
<div style="position:absolute;left:632px;top:394px;line-height:16px;text-align:left;white-space:nowrap;font-size:11px;color:#262626;">836632<br>800867</div>
<div style="position:absolute;left:680px;top:394px;line-height:16px;text-align:left;white-space:nowrap;font-size:11px;color:#262626;">836632<br>800868</div>
<div style="position:absolute;left:728px;top:394px;line-height:16px;text-align:left;white-space:nowrap;font-size:11px;color:#262626;">836632<br>800869</div>
<div style="position:absolute;left:776px;top:394px;line-height:16px;text-align:left;white-space:nowrap;font-size:11px;color:#262626;">836632<br>800870</div>
<div style="position:absolute;left:824px;top:394px;line-height:16px;text-align:left;white-space:nowrap;font-size:11px;color:#262626;">836632<br>800871</div>
<div style="position:absolute;left:872px;top:394px;line-height:16px;text-align:left;white-space:nowrap;font-size:11px;color:#262626;">836632<br>800872</div>
<div style="position:absolute;left:920px;top:394px;line-height:16px;text-align:left;white-space:nowrap;font-size:11px;color:#262626;">836632<br>800873</div>
<div style="position:absolute;left:968px;top:394px;line-height:16px;text-align:left;white-space:nowrap;font-size:11px;color:#262626;">836632<br>800874</div>
<div style="position:absolute;left:1016px;top:394px;line-height:16px;text-align:left;white-space:nowrap;font-size:11px;color:#262626;">836632<br>800875</div>
<div style="position:absolute;left:1064px;top:394px;line-height:16px;text-align:left;white-space:nowrap;font-size:11px;color:#262626;">836632<br>800876</div>
<div style="position:absolute;left:1112px;top:394px;line-height:16px;text-align:left;white-space:nowrap;font-size:11px;color:#262626;">836632<br>800877</div>
<div style="position:absolute;left:1160px;top:394px;line-height:16px;text-align:left;white-space:nowrap;font-size:11px;color:#262626;">836632<br>800878</div>
<div style="position:absolute;left:1208px;top:394px;line-height:16px;text-align:left;white-space:nowrap;font-size:11px;color:#262626;">836632<br>800879</div>
<div style="position:absolute;left:1256px;top:394px;line-height:16px;text-align:left;white-space:nowrap;font-size:11px;color:#262626;">836632<br>800880</div>
<div style="position:absolute;left:1304px;top:394px;line-height:16px;text-align:left;white-space:nowrap;font-size:11px;color:#262626;">836632<br>800881</div>
<div style="position:absolute;left:1352px;top:394px;line-height:16px;text-align:left;white-space:nowrap;font-size:11px;color:#262626;">836632<br>800882</div>
<div style="position:absolute;left:5px;top:437px;width:48px;line-height:14px;text-align:center;white-space:nowrap;font-size:11px;color:#00007f;">50</div>
<div style="position:absolute;left:58px;top:437px;line-height:14px;text-align:left;white-space:nowrap;font-size:11px;color:#000;font-family:'Liberation Serif',serif;">HI</div>
<div style="position:absolute;left:117px;top:437px;width:59px;line-height:14px;text-align:right;white-space:nowrap;font-size:11px;color:#262626;">1000</div>
<div style="position:absolute;left:183px;top:437px;line-height:14px;text-align:left;white-space:nowrap;font-size:11px;color:#262626;">10</div>
<div style="position:absolute;left:227px;top:437px;line-height:14px;text-align:left;white-space:nowrap;font-size:11px;color:#262626;">18</div>
<div style="position:absolute;left:284px;top:437px;line-height:14px;text-align:left;white-space:nowrap;font-size:11px;color:#262626;">56</div>
<div style="position:absolute;left:330px;top:437px;line-height:14px;text-align:left;white-space:nowrap;font-size:11px;color:#262626;">8366328</div>
<div style="position:absolute;left:378px;top:437px;width:73px;line-height:14px;text-align:right;white-space:nowrap;font-size:11px;color:#262626;">00883</div>
<div style="position:absolute;left:458px;top:437px;line-height:14px;text-align:left;white-space:nowrap;font-size:11px;color:#262626;">00900</div>
<div style="position:absolute;left:536px;top:428px;line-height:16px;text-align:left;white-space:nowrap;font-size:11px;color:#262626;">836632<br>800883</div>
<div style="position:absolute;left:584px;top:428px;line-height:16px;text-align:left;white-space:nowrap;font-size:11px;color:#262626;">836632<br>800884</div>
<div style="position:absolute;left:632px;top:428px;line-height:16px;text-align:left;white-space:nowrap;font-size:11px;color:#262626;">836632<br>800885</div>
<div style="position:absolute;left:680px;top:428px;line-height:16px;text-align:left;white-space:nowrap;font-size:11px;color:#262626;">836632<br>800886</div>
<div style="position:absolute;left:728px;top:428px;line-height:16px;text-align:left;white-space:nowrap;font-size:11px;color:#262626;">836632<br>800887</div>
<div style="position:absolute;left:776px;top:428px;line-height:16px;text-align:left;white-space:nowrap;font-size:11px;color:#262626;">836632<br>800888</div>
<div style="position:absolute;left:824px;top:428px;line-height:16px;text-align:left;white-space:nowrap;font-size:11px;color:#262626;">836632<br>800889</div>
<div style="position:absolute;left:872px;top:428px;line-height:16px;text-align:left;white-space:nowrap;font-size:11px;color:#262626;">836632<br>800890</div>
<div style="position:absolute;left:920px;top:428px;line-height:16px;text-align:left;white-space:nowrap;font-size:11px;color:#262626;">836632<br>800891</div>
<div style="position:absolute;left:968px;top:428px;line-height:16px;text-align:left;white-space:nowrap;font-size:11px;color:#262626;">836632<br>800892</div>
<div style="position:absolute;left:1016px;top:428px;line-height:16px;text-align:left;white-space:nowrap;font-size:11px;color:#262626;">836632<br>800893</div>
<div style="position:absolute;left:1064px;top:428px;line-height:16px;text-align:left;white-space:nowrap;font-size:11px;color:#262626;">836632<br>800894</div>
<div style="position:absolute;left:1112px;top:428px;line-height:16px;text-align:left;white-space:nowrap;font-size:11px;color:#262626;">836632<br>800895</div>
<div style="position:absolute;left:1160px;top:428px;line-height:16px;text-align:left;white-space:nowrap;font-size:11px;color:#262626;">836632<br>800896</div>
<div style="position:absolute;left:1208px;top:428px;line-height:16px;text-align:left;white-space:nowrap;font-size:11px;color:#262626;">836632<br>800897</div>
<div style="position:absolute;left:1256px;top:428px;line-height:16px;text-align:left;white-space:nowrap;font-size:11px;color:#262626;">836632<br>800898</div>
<div style="position:absolute;left:1304px;top:428px;line-height:16px;text-align:left;white-space:nowrap;font-size:11px;color:#262626;">836632<br>800899</div>
<div style="position:absolute;left:1352px;top:428px;line-height:16px;text-align:left;white-space:nowrap;font-size:11px;color:#262626;">836632<br>800900</div>
<div style="position:absolute;left:5px;top:471px;width:48px;line-height:14px;text-align:center;white-space:nowrap;font-size:11px;color:#00007f;">51</div>
<div style="position:absolute;left:58px;top:471px;line-height:14px;text-align:left;white-space:nowrap;font-size:11px;color:#000;font-family:'Liberation Serif',serif;">HI</div>
<div style="position:absolute;left:117px;top:471px;width:59px;line-height:14px;text-align:right;white-space:nowrap;font-size:11px;color:#262626;">1000</div>
<div style="position:absolute;left:183px;top:471px;line-height:14px;text-align:left;white-space:nowrap;font-size:11px;color:#262626;">10</div>
<div style="position:absolute;left:227px;top:471px;line-height:14px;text-align:left;white-space:nowrap;font-size:11px;color:#262626;">18</div>
<div style="position:absolute;left:284px;top:471px;line-height:14px;text-align:left;white-space:nowrap;font-size:11px;color:#262626;">56</div>
<div style="position:absolute;left:330px;top:471px;line-height:14px;text-align:left;white-space:nowrap;font-size:11px;color:#262626;">8366328</div>
<div style="position:absolute;left:378px;top:471px;width:73px;line-height:14px;text-align:right;white-space:nowrap;font-size:11px;color:#262626;">00901</div>
<div style="position:absolute;left:458px;top:471px;line-height:14px;text-align:left;white-space:nowrap;font-size:11px;color:#262626;">00918</div>
<div style="position:absolute;left:536px;top:462px;line-height:16px;text-align:left;white-space:nowrap;font-size:11px;color:#262626;">836632<br>800901</div>
<div style="position:absolute;left:584px;top:462px;line-height:16px;text-align:left;white-space:nowrap;font-size:11px;color:#262626;">836632<br>800902</div>
<div style="position:absolute;left:632px;top:462px;line-height:16px;text-align:left;white-space:nowrap;font-size:11px;color:#262626;">836632<br>800903</div>
<div style="position:absolute;left:680px;top:462px;line-height:16px;text-align:left;white-space:nowrap;font-size:11px;color:#262626;">836632<br>800904</div>
<div style="position:absolute;left:728px;top:462px;line-height:16px;text-align:left;white-space:nowrap;font-size:11px;color:#262626;">836632<br>800905</div>
<div style="position:absolute;left:776px;top:462px;line-height:16px;text-align:left;white-space:nowrap;font-size:11px;color:#262626;">836632<br>800906</div>
<div style="position:absolute;left:824px;top:462px;line-height:16px;text-align:left;white-space:nowrap;font-size:11px;color:#262626;">836632<br>800907</div>
<div style="position:absolute;left:872px;top:462px;line-height:16px;text-align:left;white-space:nowrap;font-size:11px;color:#262626;">836632<br>800908</div>
<div style="position:absolute;left:920px;top:462px;line-height:16px;text-align:left;white-space:nowrap;font-size:11px;color:#262626;">836632<br>800909</div>
<div style="position:absolute;left:968px;top:462px;line-height:16px;text-align:left;white-space:nowrap;font-size:11px;color:#262626;">836632<br>800910</div>
<div style="position:absolute;left:1016px;top:462px;line-height:16px;text-align:left;white-space:nowrap;font-size:11px;color:#262626;">836632<br>800911</div>
<div style="position:absolute;left:1064px;top:462px;line-height:16px;text-align:left;white-space:nowrap;font-size:11px;color:#262626;">836632<br>800912</div>
<div style="position:absolute;left:1112px;top:462px;line-height:16px;text-align:left;white-space:nowrap;font-size:11px;color:#262626;">836632<br>800913</div>
<div style="position:absolute;left:1160px;top:462px;line-height:16px;text-align:left;white-space:nowrap;font-size:11px;color:#262626;">836632<br>800914</div>
<div style="position:absolute;left:1208px;top:462px;line-height:16px;text-align:left;white-space:nowrap;font-size:11px;color:#262626;">836632<br>800915</div>
<div style="position:absolute;left:1256px;top:462px;line-height:16px;text-align:left;white-space:nowrap;font-size:11px;color:#262626;">836632<br>800916</div>
<div style="position:absolute;left:1304px;top:462px;line-height:16px;text-align:left;white-space:nowrap;font-size:11px;color:#262626;">836632<br>800917</div>
<div style="position:absolute;left:1352px;top:462px;line-height:16px;text-align:left;white-space:nowrap;font-size:11px;color:#262626;">836632<br>800918</div>
<div style="position:absolute;left:5px;top:505px;width:48px;line-height:14px;text-align:center;white-space:nowrap;font-size:11px;color:#00007f;">52</div>
<div style="position:absolute;left:58px;top:505px;line-height:14px;text-align:left;white-space:nowrap;font-size:11px;color:#000;font-family:'Liberation Serif',serif;">HI</div>
<div style="position:absolute;left:117px;top:505px;width:59px;line-height:14px;text-align:right;white-space:nowrap;font-size:11px;color:#262626;">1000</div>
<div style="position:absolute;left:183px;top:505px;line-height:14px;text-align:left;white-space:nowrap;font-size:11px;color:#262626;">10</div>
<div style="position:absolute;left:227px;top:505px;line-height:14px;text-align:left;white-space:nowrap;font-size:11px;color:#262626;">18</div>
<div style="position:absolute;left:284px;top:505px;line-height:14px;text-align:left;white-space:nowrap;font-size:11px;color:#262626;">56</div>
<div style="position:absolute;left:330px;top:505px;line-height:14px;text-align:left;white-space:nowrap;font-size:11px;color:#262626;">8366328</div>
<div style="position:absolute;left:378px;top:505px;width:73px;line-height:14px;text-align:right;white-space:nowrap;font-size:11px;color:#262626;">00919</div>
<div style="position:absolute;left:458px;top:505px;line-height:14px;text-align:left;white-space:nowrap;font-size:11px;color:#262626;">00936</div>
<div style="position:absolute;left:536px;top:496px;line-height:16px;text-align:left;white-space:nowrap;font-size:11px;color:#262626;">836632<br>800919</div>
<div style="position:absolute;left:584px;top:496px;line-height:16px;text-align:left;white-space:nowrap;font-size:11px;color:#262626;">836632<br>800920</div>
<div style="position:absolute;left:632px;top:496px;line-height:16px;text-align:left;white-space:nowrap;font-size:11px;color:#262626;">836632<br>800921</div>
<div style="position:absolute;left:680px;top:496px;line-height:16px;text-align:left;white-space:nowrap;font-size:11px;color:#262626;">836632<br>800922</div>
<div style="position:absolute;left:728px;top:496px;line-height:16px;text-align:left;white-space:nowrap;font-size:11px;color:#262626;">836632<br>800923</div>
<div style="position:absolute;left:776px;top:496px;line-height:16px;text-align:left;white-space:nowrap;font-size:11px;color:#262626;">836632<br>800924</div>
<div style="position:absolute;left:824px;top:496px;line-height:16px;text-align:left;white-space:nowrap;font-size:11px;color:#262626;">836632<br>800925</div>
<div style="position:absolute;left:872px;top:496px;line-height:16px;text-align:left;white-space:nowrap;font-size:11px;color:#262626;">836632<br>800926</div>
<div style="position:absolute;left:920px;top:496px;line-height:16px;text-align:left;white-space:nowrap;font-size:11px;color:#262626;">836632<br>800927</div>
<div style="position:absolute;left:968px;top:496px;line-height:16px;text-align:left;white-space:nowrap;font-size:11px;color:#262626;">836632<br>800928</div>
<div style="position:absolute;left:1016px;top:496px;line-height:16px;text-align:left;white-space:nowrap;font-size:11px;color:#262626;">836632<br>800929</div>
<div style="position:absolute;left:1064px;top:496px;line-height:16px;text-align:left;white-space:nowrap;font-size:11px;color:#262626;">836632<br>800930</div>
<div style="position:absolute;left:1112px;top:496px;line-height:16px;text-align:left;white-space:nowrap;font-size:11px;color:#262626;">836632<br>800931</div>
<div style="position:absolute;left:1160px;top:496px;line-height:16px;text-align:left;white-space:nowrap;font-size:11px;color:#262626;">836632<br>800932</div>
<div style="position:absolute;left:1208px;top:496px;line-height:16px;text-align:left;white-space:nowrap;font-size:11px;color:#262626;">836632<br>800933</div>
<div style="position:absolute;left:1256px;top:496px;line-height:16px;text-align:left;white-space:nowrap;font-size:11px;color:#262626;">836632<br>800934</div>
<div style="position:absolute;left:1304px;top:496px;line-height:16px;text-align:left;white-space:nowrap;font-size:11px;color:#262626;">836632<br>800935</div>
<div style="position:absolute;left:1352px;top:496px;line-height:16px;text-align:left;white-space:nowrap;font-size:11px;color:#262626;">836632<br>800936</div>
<div style="position:absolute;left:5px;top:539px;width:48px;line-height:14px;text-align:center;white-space:nowrap;font-size:11px;color:#00007f;">53</div>
<div style="position:absolute;left:58px;top:539px;line-height:14px;text-align:left;white-space:nowrap;font-size:11px;color:#000;font-family:'Liberation Serif',serif;">HI</div>
<div style="position:absolute;left:117px;top:539px;width:59px;line-height:14px;text-align:right;white-space:nowrap;font-size:11px;color:#262626;">1000</div>
<div style="position:absolute;left:183px;top:539px;line-height:14px;text-align:left;white-space:nowrap;font-size:11px;color:#262626;">10</div>
<div style="position:absolute;left:227px;top:539px;line-height:14px;text-align:left;white-space:nowrap;font-size:11px;color:#262626;">18</div>
<div style="position:absolute;left:284px;top:539px;line-height:14px;text-align:left;white-space:nowrap;font-size:11px;color:#262626;">56</div>
<div style="position:absolute;left:330px;top:539px;line-height:14px;text-align:left;white-space:nowrap;font-size:11px;color:#262626;">8366328</div>
<div style="position:absolute;left:378px;top:539px;width:73px;line-height:14px;text-align:right;white-space:nowrap;font-size:11px;color:#262626;">00937</div>
<div style="position:absolute;left:458px;top:539px;line-height:14px;text-align:left;white-space:nowrap;font-size:11px;color:#262626;">00954</div>
<div style="position:absolute;left:536px;top:530px;line-height:16px;text-align:left;white-space:nowrap;font-size:11px;color:#262626;">836632<br>800937</div>
<div style="position:absolute;left:584px;top:530px;line-height:16px;text-align:left;white-space:nowrap;font-size:11px;color:#262626;">836632<br>800938</div>
<div style="position:absolute;left:632px;top:530px;line-height:16px;text-align:left;white-space:nowrap;font-size:11px;color:#262626;">836632<br>800939</div>
<div style="position:absolute;left:680px;top:530px;line-height:16px;text-align:left;white-space:nowrap;font-size:11px;color:#262626;">836632<br>800940</div>
<div style="position:absolute;left:728px;top:530px;line-height:16px;text-align:left;white-space:nowrap;font-size:11px;color:#262626;">836632<br>800941</div>
<div style="position:absolute;left:776px;top:530px;line-height:16px;text-align:left;white-space:nowrap;font-size:11px;color:#262626;">836632<br>800942</div>
<div style="position:absolute;left:824px;top:530px;line-height:16px;text-align:left;white-space:nowrap;font-size:11px;color:#262626;">836632<br>800943</div>
<div style="position:absolute;left:872px;top:530px;line-height:16px;text-align:left;white-space:nowrap;font-size:11px;color:#262626;">836632<br>800944</div>
<div style="position:absolute;left:920px;top:530px;line-height:16px;text-align:left;white-space:nowrap;font-size:11px;color:#262626;">836632<br>800945</div>
<div style="position:absolute;left:968px;top:530px;line-height:16px;text-align:left;white-space:nowrap;font-size:11px;color:#262626;">836632<br>800946</div>
<div style="position:absolute;left:1016px;top:530px;line-height:16px;text-align:left;white-space:nowrap;font-size:11px;color:#262626;">836632<br>800947</div>
<div style="position:absolute;left:1064px;top:530px;line-height:16px;text-align:left;white-space:nowrap;font-size:11px;color:#262626;">836632<br>800948</div>
<div style="position:absolute;left:1112px;top:530px;line-height:16px;text-align:left;white-space:nowrap;font-size:11px;color:#262626;">836632<br>800949</div>
<div style="position:absolute;left:1160px;top:530px;line-height:16px;text-align:left;white-space:nowrap;font-size:11px;color:#262626;">836632<br>800950</div>
<div style="position:absolute;left:1208px;top:530px;line-height:16px;text-align:left;white-space:nowrap;font-size:11px;color:#262626;">836632<br>800951</div>
<div style="position:absolute;left:1256px;top:530px;line-height:16px;text-align:left;white-space:nowrap;font-size:11px;color:#262626;">836632<br>800952</div>
<div style="position:absolute;left:1304px;top:530px;line-height:16px;text-align:left;white-space:nowrap;font-size:11px;color:#262626;">836632<br>800953</div>
<div style="position:absolute;left:1352px;top:530px;line-height:16px;text-align:left;white-space:nowrap;font-size:11px;color:#262626;">836632<br>800954</div>
<div style="position:absolute;left:5px;top:573px;width:48px;line-height:14px;text-align:center;white-space:nowrap;font-size:11px;color:#00007f;">54</div>
<div style="position:absolute;left:58px;top:573px;line-height:14px;text-align:left;white-space:nowrap;font-size:11px;color:#000;font-family:'Liberation Serif',serif;">HI</div>
<div style="position:absolute;left:117px;top:573px;width:59px;line-height:14px;text-align:right;white-space:nowrap;font-size:11px;color:#262626;">1000</div>
<div style="position:absolute;left:183px;top:573px;line-height:14px;text-align:left;white-space:nowrap;font-size:11px;color:#262626;">10</div>
<div style="position:absolute;left:227px;top:573px;line-height:14px;text-align:left;white-space:nowrap;font-size:11px;color:#262626;">18</div>
<div style="position:absolute;left:284px;top:573px;line-height:14px;text-align:left;white-space:nowrap;font-size:11px;color:#262626;">56</div>
<div style="position:absolute;left:330px;top:573px;line-height:14px;text-align:left;white-space:nowrap;font-size:11px;color:#262626;">8366328</div>
<div style="position:absolute;left:378px;top:573px;width:73px;line-height:14px;text-align:right;white-space:nowrap;font-size:11px;color:#262626;">00955</div>
<div style="position:absolute;left:458px;top:573px;line-height:14px;text-align:left;white-space:nowrap;font-size:11px;color:#262626;">00972</div>
<div style="position:absolute;left:536px;top:564px;line-height:16px;text-align:left;white-space:nowrap;font-size:11px;color:#262626;">836632<br>800955</div>
<div style="position:absolute;left:584px;top:564px;line-height:16px;text-align:left;white-space:nowrap;font-size:11px;color:#262626;">836632<br>800956</div>
<div style="position:absolute;left:632px;top:564px;line-height:16px;text-align:left;white-space:nowrap;font-size:11px;color:#262626;">836632<br>800957</div>
<div style="position:absolute;left:680px;top:564px;line-height:16px;text-align:left;white-space:nowrap;font-size:11px;color:#262626;">836632<br>800958</div>
<div style="position:absolute;left:728px;top:564px;line-height:16px;text-align:left;white-space:nowrap;font-size:11px;color:#262626;">836632<br>800959</div>
<div style="position:absolute;left:776px;top:564px;line-height:16px;text-align:left;white-space:nowrap;font-size:11px;color:#262626;">836632<br>800960</div>
<div style="position:absolute;left:824px;top:564px;line-height:16px;text-align:left;white-space:nowrap;font-size:11px;color:#262626;">836632<br>800961</div>
<div style="position:absolute;left:872px;top:564px;line-height:16px;text-align:left;white-space:nowrap;font-size:11px;color:#262626;">836632<br>800962</div>
<div style="position:absolute;left:920px;top:564px;line-height:16px;text-align:left;white-space:nowrap;font-size:11px;color:#262626;">836632<br>800963</div>
<div style="position:absolute;left:968px;top:564px;line-height:16px;text-align:left;white-space:nowrap;font-size:11px;color:#262626;">836632<br>800964</div>
<div style="position:absolute;left:1016px;top:564px;line-height:16px;text-align:left;white-space:nowrap;font-size:11px;color:#262626;">836632<br>800965</div>
<div style="position:absolute;left:1064px;top:564px;line-height:16px;text-align:left;white-space:nowrap;font-size:11px;color:#262626;">836632<br>800966</div>
<div style="position:absolute;left:1112px;top:564px;line-height:16px;text-align:left;white-space:nowrap;font-size:11px;color:#262626;">836632<br>800967</div>
<div style="position:absolute;left:1160px;top:564px;line-height:16px;text-align:left;white-space:nowrap;font-size:11px;color:#262626;">836632<br>800968</div>
<div style="position:absolute;left:1208px;top:564px;line-height:16px;text-align:left;white-space:nowrap;font-size:11px;color:#262626;">836632<br>800969</div>
<div style="position:absolute;left:1256px;top:564px;line-height:16px;text-align:left;white-space:nowrap;font-size:11px;color:#262626;">836632<br>800970</div>
<div style="position:absolute;left:1304px;top:564px;line-height:16px;text-align:left;white-space:nowrap;font-size:11px;color:#262626;">836632<br>800971</div>
<div style="position:absolute;left:1352px;top:564px;line-height:16px;text-align:left;white-space:nowrap;font-size:11px;color:#262626;">836632<br>800972</div>
<div style="position:absolute;left:5px;top:607px;width:48px;line-height:14px;text-align:center;white-space:nowrap;font-size:11px;color:#00007f;">55</div>
<div style="position:absolute;left:58px;top:607px;line-height:14px;text-align:left;white-space:nowrap;font-size:11px;color:#000;font-family:'Liberation Serif',serif;">HI</div>
<div style="position:absolute;left:117px;top:607px;width:59px;line-height:14px;text-align:right;white-space:nowrap;font-size:11px;color:#262626;">1000</div>
<div style="position:absolute;left:183px;top:607px;line-height:14px;text-align:left;white-space:nowrap;font-size:11px;color:#262626;">10</div>
<div style="position:absolute;left:227px;top:607px;line-height:14px;text-align:left;white-space:nowrap;font-size:11px;color:#262626;">18</div>
<div style="position:absolute;left:284px;top:607px;line-height:14px;text-align:left;white-space:nowrap;font-size:11px;color:#262626;">56</div>
<div style="position:absolute;left:330px;top:607px;line-height:14px;text-align:left;white-space:nowrap;font-size:11px;color:#262626;">8366328</div>
<div style="position:absolute;left:378px;top:607px;width:73px;line-height:14px;text-align:right;white-space:nowrap;font-size:11px;color:#262626;">00973</div>
<div style="position:absolute;left:458px;top:607px;line-height:14px;text-align:left;white-space:nowrap;font-size:11px;color:#262626;">00990</div>
<div style="position:absolute;left:536px;top:598px;line-height:16px;text-align:left;white-space:nowrap;font-size:11px;color:#262626;">836632<br>800973</div>
<div style="position:absolute;left:584px;top:598px;line-height:16px;text-align:left;white-space:nowrap;font-size:11px;color:#262626;">836632<br>800974</div>
<div style="position:absolute;left:632px;top:598px;line-height:16px;text-align:left;white-space:nowrap;font-size:11px;color:#262626;">836632<br>800975</div>
<div style="position:absolute;left:680px;top:598px;line-height:16px;text-align:left;white-space:nowrap;font-size:11px;color:#262626;">836632<br>800976</div>
<div style="position:absolute;left:728px;top:598px;line-height:16px;text-align:left;white-space:nowrap;font-size:11px;color:#262626;">836632<br>800977</div>
<div style="position:absolute;left:776px;top:598px;line-height:16px;text-align:left;white-space:nowrap;font-size:11px;color:#262626;">836632<br>800978</div>
<div style="position:absolute;left:824px;top:598px;line-height:16px;text-align:left;white-space:nowrap;font-size:11px;color:#262626;">836632<br>800979</div>
<div style="position:absolute;left:872px;top:598px;line-height:16px;text-align:left;white-space:nowrap;font-size:11px;color:#262626;">836632<br>800980</div>
<div style="position:absolute;left:920px;top:598px;line-height:16px;text-align:left;white-space:nowrap;font-size:11px;color:#262626;">836632<br>800981</div>
<div style="position:absolute;left:968px;top:598px;line-height:16px;text-align:left;white-space:nowrap;font-size:11px;color:#262626;">836632<br>800982</div>
<div style="position:absolute;left:1016px;top:598px;line-height:16px;text-align:left;white-space:nowrap;font-size:11px;color:#262626;">836632<br>800983</div>
<div style="position:absolute;left:1064px;top:598px;line-height:16px;text-align:left;white-space:nowrap;font-size:11px;color:#262626;">836632<br>800984</div>
<div style="position:absolute;left:1112px;top:598px;line-height:16px;text-align:left;white-space:nowrap;font-size:11px;color:#262626;">836632<br>800985</div>
<div style="position:absolute;left:1160px;top:598px;line-height:16px;text-align:left;white-space:nowrap;font-size:11px;color:#262626;">836632<br>800986</div>
<div style="position:absolute;left:1208px;top:598px;line-height:16px;text-align:left;white-space:nowrap;font-size:11px;color:#262626;">836632<br>800987</div>
<div style="position:absolute;left:1256px;top:598px;line-height:16px;text-align:left;white-space:nowrap;font-size:11px;color:#262626;">836632<br>800988</div>
<div style="position:absolute;left:1304px;top:598px;line-height:16px;text-align:left;white-space:nowrap;font-size:11px;color:#262626;">836632<br>800989</div>
<div style="position:absolute;left:1352px;top:598px;line-height:16px;text-align:left;white-space:nowrap;font-size:11px;color:#262626;">836632<br>800990</div>
<div style="position:absolute;left:5px;top:641px;width:48px;line-height:14px;text-align:center;white-space:nowrap;font-size:11px;color:#00007f;">56</div>
<div style="position:absolute;left:58px;top:641px;line-height:14px;text-align:left;white-space:nowrap;font-size:11px;color:#000;font-family:'Liberation Serif',serif;">HI</div>
<div style="position:absolute;left:117px;top:641px;width:59px;line-height:14px;text-align:right;white-space:nowrap;font-size:11px;color:#262626;">1000</div>
<div style="position:absolute;left:183px;top:641px;line-height:14px;text-align:left;white-space:nowrap;font-size:11px;color:#262626;">10</div>
<div style="position:absolute;left:227px;top:641px;line-height:14px;text-align:left;white-space:nowrap;font-size:11px;color:#262626;">18</div>
<div style="position:absolute;left:284px;top:641px;line-height:14px;text-align:left;white-space:nowrap;font-size:11px;color:#262626;">56</div>
<div style="position:absolute;left:330px;top:641px;line-height:14px;text-align:left;white-space:nowrap;font-size:11px;color:#262626;">8366328</div>
<div style="position:absolute;left:378px;top:641px;width:73px;line-height:14px;text-align:right;white-space:nowrap;font-size:11px;color:#262626;">00991</div>
<div style="position:absolute;left:458px;top:641px;line-height:14px;text-align:left;white-space:nowrap;font-size:11px;color:#262626;">01000</div>
<div style="position:absolute;left:536px;top:632px;line-height:16px;text-align:left;white-space:nowrap;font-size:11px;color:#262626;">836632<br>800991</div>
<div style="position:absolute;left:584px;top:632px;line-height:16px;text-align:left;white-space:nowrap;font-size:11px;color:#262626;">836632<br>800992</div>
<div style="position:absolute;left:632px;top:632px;line-height:16px;text-align:left;white-space:nowrap;font-size:11px;color:#262626;">836632<br>800993</div>
<div style="position:absolute;left:680px;top:632px;line-height:16px;text-align:left;white-space:nowrap;font-size:11px;color:#262626;">836632<br>800994</div>
<div style="position:absolute;left:728px;top:632px;line-height:16px;text-align:left;white-space:nowrap;font-size:11px;color:#262626;">836632<br>800995</div>
<div style="position:absolute;left:776px;top:632px;line-height:16px;text-align:left;white-space:nowrap;font-size:11px;color:#262626;">836632<br>800996</div>
<div style="position:absolute;left:824px;top:632px;line-height:16px;text-align:left;white-space:nowrap;font-size:11px;color:#262626;">836632<br>800997</div>
<div style="position:absolute;left:872px;top:632px;line-height:16px;text-align:left;white-space:nowrap;font-size:11px;color:#262626;">836632<br>800998</div>
<div style="position:absolute;left:920px;top:632px;line-height:16px;text-align:left;white-space:nowrap;font-size:11px;color:#262626;">836632<br>800999</div>
<div style="position:absolute;left:968px;top:632px;line-height:16px;text-align:left;white-space:nowrap;font-size:11px;color:#262626;">836632<br>801000</div>
<div style="position:absolute;left:5px;top:671px;width:48px;line-height:14px;text-align:center;white-space:nowrap;font-size:11px;color:#00007f;">57</div>
<div style="position:absolute;left:5px;top:696px;width:48px;line-height:14px;text-align:center;white-space:nowrap;font-size:11px;color:#00007f;">58</div>
<div style="position:absolute;left:57px;top:714px;line-height:16px;text-align:left;white-space:nowrap;font-size:12px;color:#111;">合计<span style="font-size:11px;margin-left:7px">56</span></div>
<div style="position:absolute;left:117px;top:715px;width:59px;line-height:14px;text-align:right;white-space:nowrap;font-size:11px;color:#262626;">56000</div>
<div style="position:absolute;left:64px;top:180px;width:28px;height:12px;background:#f0f6f3;border-radius:14px 14px 0 0;"></div>
<div style="position:absolute;left:55px;top:192px;width:11px;height:12px;background:#e9f0ef;"></div>
<div style="position:absolute;left:66px;top:192px;width:12px;height:12px;background:#e1e9e9;"></div>
<div style="position:absolute;left:78px;top:192px;width:12px;height:12px;background:#e6eeee;"></div>
<div style="position:absolute;left:90px;top:192px;width:12px;height:12px;background:#eef8f8;"></div>
<div style="position:absolute;left:55px;top:204px;width:11px;height:12px;background:#d2dada;"></div>
<div style="position:absolute;left:66px;top:204px;width:12px;height:12px;background:#d0d8d8;"></div>
<div style="position:absolute;left:78px;top:204px;width:12px;height:12px;background:#d2dada;"></div>
<div style="position:absolute;left:90px;top:204px;width:12px;height:12px;background:#e8f0f0;"></div>
<div style="position:absolute;left:55px;top:216px;width:51px;height:12px;background:#f0f6f2;"></div>
<div style="position:absolute;left:58px;top:228px;width:8px;height:12px;background:#e2e0de;"></div>
<div style="position:absolute;left:66px;top:228px;width:12px;height:12px;background:#e0dfdd;"></div>
<div style="position:absolute;left:78px;top:228px;width:12px;height:12px;background:#e2e1df;"></div>
<div style="position:absolute;left:90px;top:228px;width:12px;height:12px;background:#f4f3f1;"></div>
<div style="position:absolute;left:62px;top:240px;width:4px;height:12px;background:#e2e0de;"></div>
<div style="position:absolute;left:66px;top:240px;width:12px;height:12px;background:#e0dfdd;"></div>
<div style="position:absolute;left:78px;top:240px;width:12px;height:12px;background:#e4e3e1;"></div>
<div style="position:absolute;left:90px;top:240px;width:12px;height:12px;background:#f6f5f3;"></div>
<div style="position:absolute;left:63px;top:252px;width:51px;height:12px;background:#f0f6f2;"></div>
<div style="position:absolute;left:66px;top:264px;width:12px;height:12px;background:#d2d9d9;"></div>
<div style="position:absolute;left:78px;top:264px;width:12px;height:12px;background:#d9e0e0;"></div>
<div style="position:absolute;left:90px;top:264px;width:12px;height:12px;background:#e9f1f1;"></div>
<div style="position:absolute;left:102px;top:264px;width:12px;height:12px;background:#f4fcfc;"></div>
<div style="position:absolute;left:66px;top:276px;width:12px;height:12px;background:#dde4e4;"></div>
<div style="position:absolute;left:78px;top:276px;width:12px;height:12px;background:#e0e7e7;"></div>
<div style="position:absolute;left:90px;top:276px;width:12px;height:12px;background:#eef7f7;"></div>
<div style="position:absolute;left:102px;top:276px;width:12px;height:12px;background:#f3fdfd;"></div>
<div style="position:absolute;left:66px;top:288px;width:48px;height:12px;background:#f2f7f3;"></div>
<div style="position:absolute;left:66px;top:300px;width:12px;height:12px;background:#c8c8c8;"></div>
<div style="position:absolute;left:78px;top:300px;width:12px;height:12px;background:#cccccc;"></div>
<div style="position:absolute;left:90px;top:300px;width:12px;height:12px;background:#ececec;"></div>
<div style="position:absolute;left:102px;top:300px;width:12px;height:12px;background:#fdfdfb;"></div>
<div style="position:absolute;left:66px;top:312px;width:48px;height:12px;background:#fdfdfb;"></div>
<div style="position:absolute;left:66px;top:324px;width:48px;height:12px;background:#eff7f4;"></div>
<div style="position:absolute;left:66px;top:336px;width:12px;height:12px;background:#c6caca;"></div>
<div style="position:absolute;left:78px;top:336px;width:12px;height:12px;background:#c9cdcd;"></div>
<div style="position:absolute;left:90px;top:336px;width:12px;height:12px;background:#e6ebeb;"></div>
<div style="position:absolute;left:102px;top:336px;width:12px;height:12px;background:#f4fdfd;"></div>
<div style="position:absolute;left:65px;top:348px;width:49px;height:12px;background:#eef7f5;"></div>
<div style="position:absolute;left:65px;top:360px;width:49px;height:12px;background:#fdfdfb;"></div>
<div style="position:absolute;left:64px;top:372px;width:14px;height:12px;background:#c8c8c8;"></div>
<div style="position:absolute;left:78px;top:372px;width:12px;height:12px;background:#cbcbcb;"></div>
<div style="position:absolute;left:90px;top:372px;width:12px;height:12px;background:#ededed;"></div>
<div style="position:absolute;left:102px;top:372px;width:12px;height:12px;background:#fdfdfb;"></div>
<div style="position:absolute;left:63px;top:384px;width:50px;height:12px;background:#f2f7f3;"></div>
<div style="position:absolute;left:62px;top:396px;width:16px;height:12px;background:#e0e8e8;"></div>
<div style="position:absolute;left:78px;top:396px;width:12px;height:12px;background:#e4ecec;"></div>
<div style="position:absolute;left:90px;top:396px;width:12px;height:12px;background:#eefafa;"></div>
<div style="position:absolute;left:58px;top:408px;width:8px;height:12px;background:#d3dbdb;"></div>
<div style="position:absolute;left:66px;top:408px;width:12px;height:12px;background:#d2d9d9;"></div>
<div style="position:absolute;left:78px;top:408px;width:12px;height:12px;background:#d4dcdc;"></div>
<div style="position:absolute;left:90px;top:408px;width:12px;height:12px;background:#e9f2f2;"></div>
<div style="position:absolute;left:57px;top:420px;width:50px;height:12px;background:#f0f6f2;"></div>
<div style="position:absolute;left:57px;top:432px;width:9px;height:12px;background:#e3e3e1;"></div>
<div style="position:absolute;left:66px;top:432px;width:12px;height:12px;background:#e1e1df;"></div>
<div style="position:absolute;left:78px;top:432px;width:12px;height:12px;background:#e3e3e1;"></div>
<div style="position:absolute;left:90px;top:432px;width:12px;height:12px;background:#f5f5f3;"></div>
<div style="position:absolute;left:55px;top:444px;width:11px;height:12px;background:#e4e4e2;"></div>
<div style="position:absolute;left:66px;top:444px;width:12px;height:12px;background:#e2e2e0;"></div>
<div style="position:absolute;left:78px;top:444px;width:12px;height:12px;background:#e4e4e2;"></div>
<div style="position:absolute;left:90px;top:444px;width:12px;height:12px;background:#f6f6f4;"></div>
<div style="position:absolute;left:55px;top:456px;width:49px;height:12px;background:#f0f6f2;"></div>
<div style="position:absolute;left:54px;top:468px;width:12px;height:12px;background:#d2dada;"></div>
<div style="position:absolute;left:66px;top:468px;width:12px;height:12px;background:#d0d8d8;"></div>
<div style="position:absolute;left:78px;top:468px;width:12px;height:12px;background:#d6dede;"></div>
<div style="position:absolute;left:90px;top:468px;width:12px;height:12px;background:#ecf5f5;"></div>
<div style="position:absolute;left:54px;top:480px;width:12px;height:12px;background:#e4ecec;"></div>
<div style="position:absolute;left:66px;top:480px;width:12px;height:12px;background:#e2eaea;"></div>
<div style="position:absolute;left:78px;top:480px;width:12px;height:12px;background:#e0e8e8;"></div>
<div style="position:absolute;left:90px;top:480px;width:12px;height:12px;background:#f0f9f9;"></div>
<div style="position:absolute;left:50px;top:492px;width:49px;height:12px;background:#f0f6f2;"></div>
<div style="position:absolute;left:54px;top:504px;width:12px;height:12px;background:#c8c8c8;"></div>
<div style="position:absolute;left:66px;top:504px;width:12px;height:12px;background:#c6c6c6;"></div>
<div style="position:absolute;left:78px;top:504px;width:12px;height:12px;background:#cacaca;"></div>
<div style="position:absolute;left:90px;top:504px;width:8px;height:12px;background:#eeeeee;"></div>
<div style="position:absolute;left:50px;top:516px;width:48px;height:12px;background:#fdfdfb;"></div>
<div style="position:absolute;left:48px;top:528px;width:49px;height:12px;background:#eef7f4;"></div>
<div style="position:absolute;left:48px;top:540px;width:6px;height:12px;background:#eef7f4;"></div>
<div style="position:absolute;left:54px;top:540px;width:12px;height:12px;background:#c8cccc;"></div>
<div style="position:absolute;left:66px;top:540px;width:12px;height:12px;background:#c5c9c9;"></div>
<div style="position:absolute;left:78px;top:540px;width:12px;height:12px;background:#c9cdcd;"></div>
<div style="position:absolute;left:90px;top:540px;width:7px;height:12px;background:#e6ebeb;"></div>
<div style="position:absolute;left:48px;top:552px;width:49px;height:12px;background:#eef7f4;"></div>
<div style="position:absolute;left:48px;top:564px;width:49px;height:12px;background:#fdfdfb;"></div>
<div style="position:absolute;left:48px;top:576px;width:6px;height:12px;background:#f6f9f6;"></div>
<div style="position:absolute;left:54px;top:576px;width:12px;height:12px;background:#c9c9c9;"></div>
<div style="position:absolute;left:66px;top:576px;width:12px;height:12px;background:#c6c6c6;"></div>
<div style="position:absolute;left:78px;top:576px;width:12px;height:12px;background:#cbcbcb;"></div>
<div style="position:absolute;left:90px;top:576px;width:7px;height:12px;background:#ececec;"></div>
<div style="position:absolute;left:48px;top:588px;width:49px;height:12px;background:#eff7f3;"></div>
<div style="position:absolute;left:50px;top:600px;width:4px;height:12px;background:#eef5f3;"></div>
<div style="position:absolute;left:54px;top:600px;width:12px;height:12px;background:#e3ebeb;"></div>
<div style="position:absolute;left:66px;top:600px;width:12px;height:12px;background:#e1e9e9;"></div>
<div style="position:absolute;left:78px;top:600px;width:12px;height:12px;background:#e4ecec;"></div>
<div style="position:absolute;left:90px;top:600px;width:10px;height:12px;background:#eef7f7;"></div>
<div style="position:absolute;left:52px;top:612px;width:2px;height:12px;background:#eef5f3;"></div>
<div style="position:absolute;left:54px;top:612px;width:12px;height:12px;background:#d1d9d9;"></div>
<div style="position:absolute;left:66px;top:612px;width:12px;height:12px;background:#d0d7d7;"></div>
<div style="position:absolute;left:78px;top:612px;width:12px;height:12px;background:#d3dada;"></div>
<div style="position:absolute;left:90px;top:612px;width:10px;height:12px;background:#e6efef;"></div>
<div style="position:absolute;left:53px;top:624px;width:47px;height:12px;background:#f0f6f2;"></div>
<div style="position:absolute;left:54px;top:636px;width:12px;height:12px;background:#e3e3e1;"></div>
<div style="position:absolute;left:66px;top:636px;width:12px;height:12px;background:#e1e1df;"></div>
<div style="position:absolute;left:78px;top:636px;width:12px;height:12px;background:#e5e5e3;"></div>
<div style="position:absolute;left:90px;top:636px;width:11px;height:12px;background:#f6f6f4;"></div>
<div style="position:absolute;left:54px;top:648px;width:12px;height:12px;background:#e6e6e4;"></div>
<div style="position:absolute;left:66px;top:648px;width:12px;height:12px;background:#e3e3e1;"></div>
<div style="position:absolute;left:78px;top:648px;width:12px;height:12px;background:#e6e6e4;"></div>
<div style="position:absolute;left:90px;top:648px;width:11px;height:12px;background:#f6f6f4;"></div>
<div style="position:absolute;left:55px;top:660px;width:45px;height:10px;background:#f0f6f2;border-radius:0 0 20px 20px;"></div>
<div style="position:absolute;left:4px;top:739px;width:1524px;height:8px;background:#f0f0f0;"></div>
<div style="position:absolute;left:21px;top:739px;width:17px;height:8px;background:#cdcdcd;"></div>
<svg style="position:absolute;left:8px;top:740px" width="8" height="7"><path d="M7 3 L2 7" stroke="#444" stroke-width="1.8"/></svg>
</body></html>
